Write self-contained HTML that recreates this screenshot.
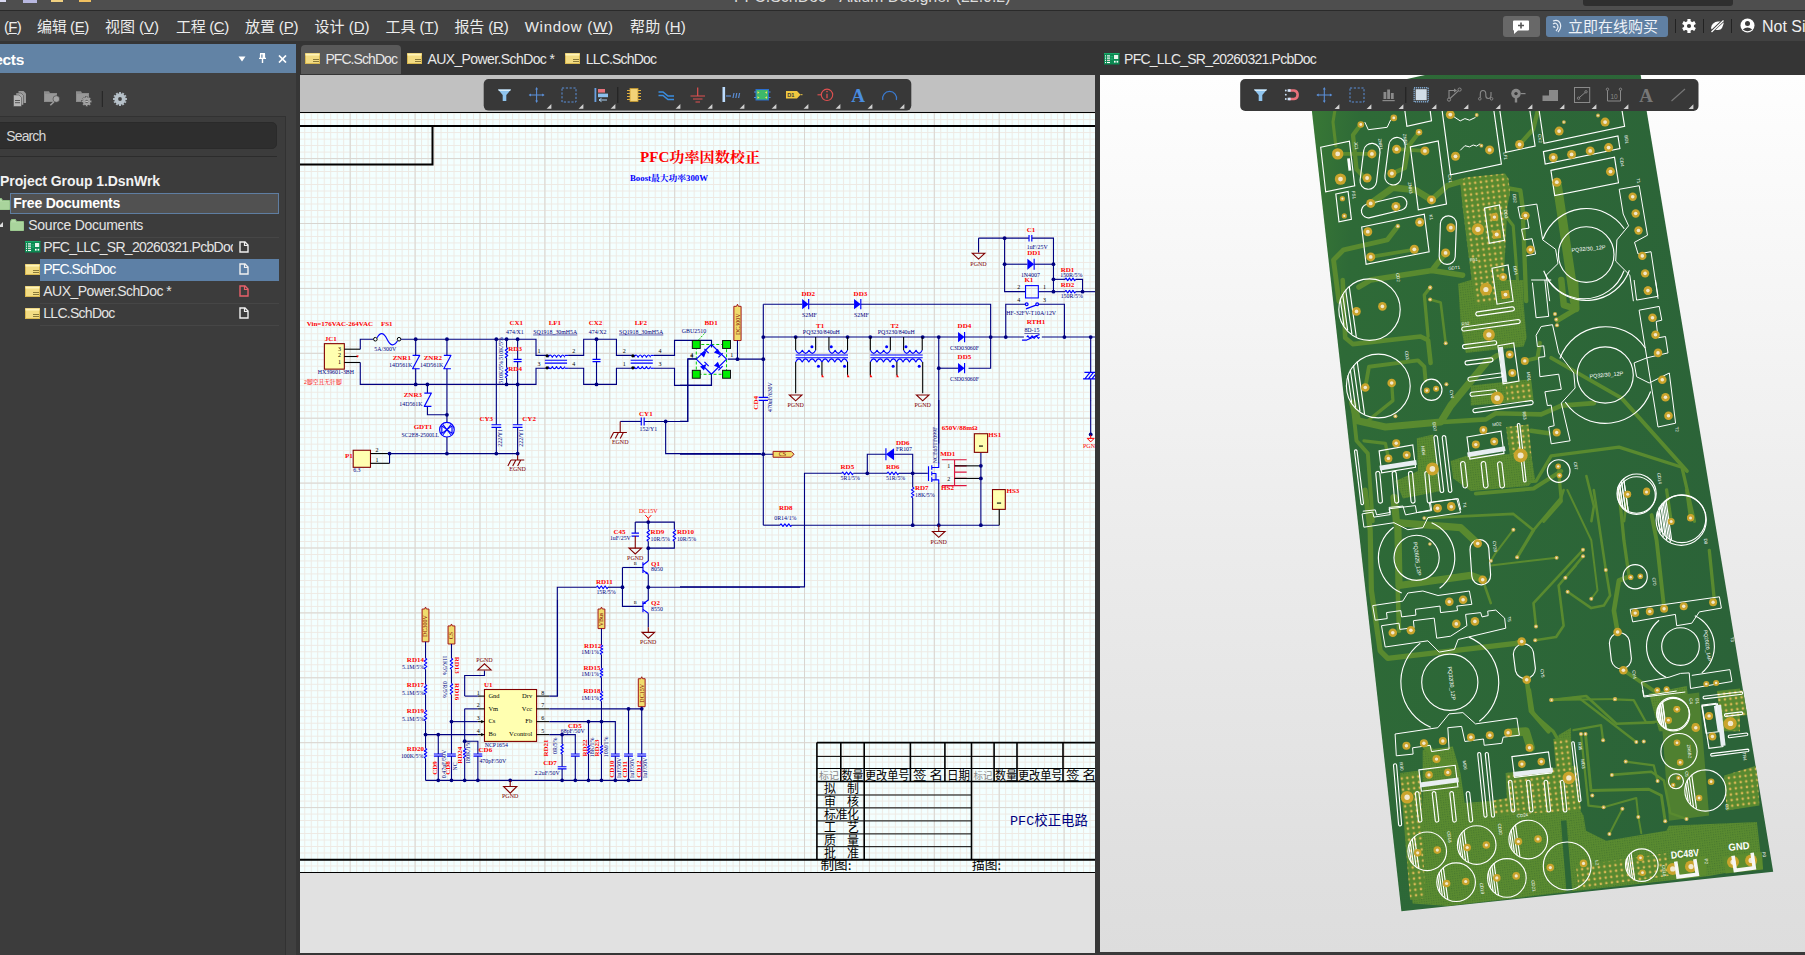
<!DOCTYPE html>
<html lang="zh"><head><meta charset="utf-8"><title>Altium Designer</title>
<style>
*{box-sizing:border-box;margin:0;padding:0}
html,body{width:1805px;height:955px;overflow:hidden;background:#3c3c3c;font-family:"Liberation Sans","Noto Sans CJK SC",sans-serif;color:#e6e6e6}
.a{position:absolute}
.t{position:absolute;white-space:nowrap;line-height:1}
#title{left:0;top:0;width:1805px;height:10px;background:#4e4e4e}
#menubar{left:0;top:10px;width:1805px;height:31px;background:#424242;border-top:1px solid #2a2a2a}
#tabbar{left:0;top:41px;width:1805px;height:34px;background:#353535}
.m{position:absolute;top:18px;font-size:15px;line-height:17px;white-space:nowrap;color:#ececec}
.m u{text-decoration-thickness:1px;text-underline-offset:2px}
#lp{left:0;top:44px;width:296px;height:911px;background:#404040}
#lph{left:0;top:44px;width:296px;height:29px;background:#6283a5}
#lpin{left:0;top:116px;width:286px;height:839px;background:#3c3c3c;border-top:1px solid #323232;border-right:1px solid #323232}
#gap{left:296px;top:44px;width:4px;height:911px;background:#363636}
#search{left:-6px;top:122px;width:283px;height:27px;background:#2e2e2e;border-radius:5px;border:1px solid #2a2a2a}
.tr{position:absolute;font-size:14px;line-height:16px;white-space:nowrap;color:#e4e4e4}
.tab{position:absolute;font-size:14px;line-height:16px;white-space:nowrap;color:#e8e8e8;top:51px}

#schwin{left:300px;top:75px;width:796px;height:880px;background:#c1c1c1;overflow:hidden}
#split{left:1095px;top:75px;width:5px;height:880px;background:#363636}
#schsvg{left:300px;top:75px}
#schsvg text{font-family:"Liberation Serif","Noto Serif CJK SC",serif}
.d{fill:#f00;font-weight:bold;font-size:7px}
.v{fill:#000080;font-size:5.9px}
.pn{fill:#000;font-size:6px}
.g{fill:#800000;font-size:6px}
.w{stroke:#000080;stroke-width:1.12;fill:none}
.s{stroke:#00f;stroke-width:1.15;fill:none;stroke-linejoin:round}
.k{stroke:#000;stroke-width:1.1;fill:none}
.gr{stroke:#800000;stroke-width:1.1;fill:none}
.j{fill:#000080}

#pcbwin{left:1100px;top:75px;width:705px;height:880px;background:linear-gradient(#fefefe 0%,#f9f9f9 15%,#ececec 52%,#e0e0e0 88%,#dddddd 100%);overflow:hidden}
#pcbsvg{left:1100px;top:75px}
#pcbsvg text{font-family:"Liberation Sans",sans-serif}
.sk{stroke:#fff;stroke-width:1.15;fill:none}
.cu{stroke:#598a2f;fill:none;stroke-linecap:round;stroke-linejoin:round}
</style></head>
<body>
<div id="schwin" class="a"></div><svg id="schsvg" class="a" width="796" height="880" viewBox="300 75 796 880"><defs><pattern id="gm" x="349.7" y="223" width="6.49" height="6.49" patternUnits="userSpaceOnUse"><path d="M0.5 0V6.49M0 0.5H6.49" stroke="#eee9e3" stroke-width="1" fill="none"/></pattern><pattern id="gM" x="349.7" y="223" width="64.9" height="64.9" patternUnits="userSpaceOnUse"><path d="M0.5 0V64.9M0 0.5H64.9" stroke="#d8d5d0" stroke-width="1" fill="none"/></pattern></defs>
<rect x="300" y="75" width="796" height="38" fill="#c1c1c1"/>
<rect x="300" y="873" width="796" height="82" fill="#e1e1e1"/>
<rect x="300" y="113" width="796" height="760" fill="#f3ffff"/>
<rect x="300" y="113" width="796" height="760" fill="url(#gm)"/>
<rect x="300" y="113" width="796" height="760" fill="url(#gM)"/>
<path d="M300 112.5H1096M300 872.5H1096" stroke="#000" stroke-width="1"/>
<path d="M300 126H1096M300 164.5H432.5V126M300 859.7H1096" stroke="#000" stroke-width="2" fill="none"/>
<rect x="300" y="953" width="796" height="2" fill="#363636"/>
<rect x="324.38" y="343.66" width="19.94" height="25.48" fill="#ffffb0" stroke="#800000" stroke-width="1.1"/>
<path class="k" d="M344.32 349.2 L360.28 349.2"/>
<path class="k" d="M344.32 356.51 L357.17 356.51"/>
<path class="k" d="M344.32 362.49 L360.28 362.49"/>
<path d="M356.51 355.18L358.95 355.84L357.17 357.84Z" fill="#f00"/>
<text class="pn" x="339.45" y="350.97" text-anchor="middle">3</text>
<text class="pn" x="339.45" y="357.4" text-anchor="middle">2</text>
<text class="pn" x="339.45" y="364.27" text-anchor="middle">1</text>
<text class="d" x="324.82" y="341.44" text-anchor="start">JC1</text>
<text class="v" x="317.73" y="374.02" text-anchor="start">HX39601-3BH</text>
<text class="d" x="303.99" y="383.77" text-anchor="start" textLength="37.7" lengthAdjust="spacingAndGlyphs" style="font-size:6.2px;font-weight:normal">2脚空且无针脚</text>
<text class="d" x="306.65" y="326.15" text-anchor="start">Vin=176VAC-264VAC</text>
<text class="d" x="380.89" y="326.15" text-anchor="start">FS1</text>
<path class="w" d="M360.28 349.2 L360.28 339.22 L373.57 339.22"/>
<circle cx="375.35" cy="339.22" r="1.8" fill="#f3ffff" stroke="#000" stroke-width="1"/><circle cx="399.06" cy="339.22" r="1.8" fill="#f3ffff" stroke="#000" stroke-width="1"/>
<path class="s" d="M377.12 337.67 Q381.99 328.81 387.09 339.22 T397.51 340.78"/>
<text class="v" x="374.24" y="350.53" text-anchor="start">5A/300V</text>
<path class="w" d="M400.83 339.22 L536.01 339.22 L536.01 355.4 L545.98 355.4"/>
<path class="w" d="M360.28 362.49 L360.28 384.43 L536.01 384.43 L536.01 368.25 L545.98 368.25"/>
<path class="w" d="M415.68 339.22 L415.68 355.4"/>
<path class="w" d="M415.68 368.7 L415.68 384.43"/>
<path class="s" d="M412.58 355.4H419.67L412.58 368.7H419.67"/>
<path class="w" d="M446.93 339.22 L446.93 355.4"/>
<path class="w" d="M446.93 368.7 L446.93 422.33"/>
<path class="w" d="M446.93 436.95 L446.93 453.57"/>
<path class="s" d="M443.82 355.4H450.91L443.82 368.7H450.91"/>
<path class="w" d="M427.42 384.43 L427.42 393.07"/>
<path class="w" d="M427.42 406.37 L427.42 414.79 L446.93 414.79"/>
<path class="s" d="M424.32 393.07H431.41L424.32 406.37H431.41"/>
<text class="d" x="392.63" y="359.83" text-anchor="start">ZNR1</text>
<text class="v" x="389.09" y="366.93" text-anchor="start">14D561K</text>
<text class="d" x="423.66" y="359.83" text-anchor="start">ZNR2</text>
<text class="v" x="420.11" y="366.93" text-anchor="start">14D561K</text>
<text class="d" x="403.71" y="396.62" text-anchor="start">ZNR3</text>
<text class="v" x="399.28" y="405.71" text-anchor="start">14D561K</text>
<circle cx="446.93" cy="429.64" r="7.31" class="s" stroke-width="1.3"/>
<path d="M441.83 425.87L446.93 429.64L441.83 433.41ZM452.02 425.87L446.93 429.64L452.02 433.41Z" fill="none" class="s"/><path class="s" d="M442.94 424.54L450.91 434.74M450.91 424.54L442.94 434.74"/>
<text class="d" x="413.68" y="428.53" text-anchor="start">GDT1</text>
<text class="v" x="401.5" y="436.51" text-anchor="start">SC2E8-2500LL</text>
<path class="w" d="M389.53 453.57 L517.62 453.57"/>
<path class="w" d="M389.53 453.57 L389.53 463.32"/>
<rect x="353.19" y="450.25" width="17.29" height="17.06" fill="#ffffb0" stroke="#800000" stroke-width="1.1"/>
<path class="k" d="M370.47 453.57 L389.53 453.57"/>
<path class="k" d="M370.47 463.32 L389.53 463.32"/>
<text class="pn" x="377.12" y="452.47" text-anchor="middle">2</text>
<text class="pn" x="377.12" y="462.22" text-anchor="middle">1</text>
<text class="d" x="344.99" y="458.23" text-anchor="start">P1</text>
<text class="v" x="353.19" y="471.75" text-anchor="start">6.3</text>
<path class="w" d="M496.34 339.22 L496.34 424.76"/>
<path class="w" d="M496.34 427.42 L496.34 453.57"/>
<path class="s" stroke-width="1.4" d="M491.47 424.76H501.22M491.47 427.42H501.22"/>
<text class="d" x="479.5" y="421.44" text-anchor="start">CY3</text>
<text class="v" x="501.66" y="446.7" text-anchor="start" transform="rotate(-90 501.66 446.7)">222/Y1</text>
<path class="w" d="M517.62 339.22 L517.62 359.39"/>
<path class="w" d="M517.62 361.61 L517.62 424.76"/>
<path class="w" d="M517.62 427.42 L517.62 453.57"/>
<path class="s" stroke-width="1.4" d="M513.63 359.39H521.61M513.63 361.61H521.61"/>
<path class="s" stroke-width="1.4" d="M512.74 424.76H522.49M512.74 427.42H522.49"/>
<text class="d" x="522.27" y="421.44" text-anchor="start">CY2</text>
<text class="v" x="522.71" y="446.7" text-anchor="start" transform="rotate(-90 522.71 446.7)">222/Y1</text>
<path class="gr" d="M517.62 453.57 L517.62 460.0"/>
<path class="gr" d="M510.97 460.0H524.27M510.97 460.0L507.87 465.98M515.84 460.0L512.74 465.98M520.72 460.0L517.62 465.98"/>
<text class="g" x="517.62" y="471.08" text-anchor="middle">EGND</text>
<path class="w" d="M506.54 339.22 L506.54 347.65"/>
<path class="s" d="M506.54 347.65 L507.76 348.51 L505.32 350.25 L506.54 351.12 L507.76 351.99 L505.32 353.72 L506.54 354.59 L507.76 355.46 L505.32 357.19 L506.54 358.06"/>
<path class="w" d="M506.54 358.06 L506.54 367.59"/>
<path class="s" d="M506.54 367.59 L507.76 368.46 L505.32 370.19 L506.54 371.06 L507.76 371.93 L505.32 373.67 L506.54 374.53 L507.76 375.4 L505.32 377.14 L506.54 378.01"/>
<path class="w" d="M506.54 378.01 L506.54 384.43"/>
<text class="d" x="508.31" y="351.41" text-anchor="start">RD3</text>
<text class="d" x="508.31" y="371.36" text-anchor="start">RD4</text>
<text class="v" x="502.55" y="383.77" text-anchor="start" transform="rotate(-90 502.55 383.77)">510K/5%  510K/5%</text>
<text class="d" x="509.42" y="325.48" text-anchor="start">CX1</text>
<text class="v" x="506.09" y="333.68" text-anchor="start">474/X1</text>
<circle class="j" cx="415.68" cy="339.22" r="1.9"/>
<circle class="j" cx="446.93" cy="339.22" r="1.9"/>
<circle class="j" cx="496.34" cy="339.22" r="1.9"/>
<circle class="j" cx="506.54" cy="339.22" r="1.9"/>
<circle class="j" cx="517.62" cy="339.22" r="1.9"/>
<circle class="j" cx="415.68" cy="384.43" r="1.9"/>
<circle class="j" cx="427.42" cy="384.43" r="1.9"/>
<circle class="j" cx="506.54" cy="384.43" r="1.9"/>
<circle class="j" cx="517.62" cy="384.43" r="1.9"/>
<circle class="j" cx="446.93" cy="414.79" r="1.9"/>
<circle class="j" cx="389.53" cy="453.57" r="1.9"/>
<circle class="j" cx="446.93" cy="453.57" r="1.9"/>
<circle class="j" cx="496.34" cy="453.57" r="1.9"/>
<circle class="j" cx="517.62" cy="453.57" r="1.9"/>
<path class="s" d="M545.98 355.4 L550.42 355.4"/>
<path class="s" d="M564.82 355.4 L568.14 355.4"/>
<path class="s" d="M545.98 368.25 L550.42 368.25"/>
<path class="s" d="M564.82 368.25 L568.14 368.25"/>
<path class="s" d="M548.2 357.17 Q550.28 352.74 552.35 357.17 Q554.43 352.74 556.51 357.17 Q558.59 352.74 560.66 357.17 Q562.74 352.74 564.82 357.17 M548.2 366.48 Q550.28 370.91 552.35 366.48 Q554.43 370.91 556.51 366.48 Q558.59 370.91 560.66 366.48 Q562.74 370.91 564.82 366.48"/>
<path class="s" stroke-width="1.6" d="M544.88 360.28H567.04M544.88 363.16H567.04"/>
<circle cx="547.09" cy="355.84" r="1.6" fill="#000"/><circle cx="547.09" cy="367.81" r="1.6" fill="#000"/>
<text class="d" x="548.64" y="325.48" text-anchor="start">LF1</text>
<text class="v" x="533.13" y="333.68" text-anchor="start" text-decoration="underline">SQ1918_30mH5A</text>
<text class="pn" x="538.89" y="353.19" text-anchor="middle">1</text>
<text class="pn" x="573.68" y="353.19" text-anchor="middle">2</text>
<text class="pn" x="538.89" y="366.48" text-anchor="middle">3</text>
<text class="pn" x="573.68" y="366.04" text-anchor="middle">4</text>
<path class="w" d="M568.14 355.4 L583.66 355.4 L583.66 339.22 L616.45 339.22 L616.45 355.4 L631.75 355.4"/>
<path class="w" d="M568.14 368.25 L583.66 368.25 L583.66 384.43 L616.45 384.43 L616.45 368.25 L631.75 368.25"/>
<path class="w" d="M596.51 339.22 L596.51 359.39"/>
<path class="w" d="M596.51 361.61 L596.51 384.43"/>
<path class="s" stroke-width="1.4" d="M592.52 359.39H600.5M592.52 361.61H600.5"/>
<circle class="j" cx="596.51" cy="339.22" r="1.9"/>
<circle class="j" cx="596.51" cy="384.43" r="1.9"/>
<text class="d" x="588.75" y="325.48" text-anchor="start">CX2</text>
<text class="v" x="588.75" y="333.68" text-anchor="start">474/X2</text>
<path class="s" d="M631.75 355.4 L636.18 355.4"/>
<path class="s" d="M650.58 355.4 L653.91 355.4"/>
<path class="s" d="M631.75 368.25 L636.18 368.25"/>
<path class="s" d="M650.58 368.25 L653.91 368.25"/>
<path class="s" d="M633.96 357.17 Q636.04 352.74 638.12 357.17 Q640.19 352.74 642.27 357.17 Q644.35 352.74 646.43 357.17 Q648.5 352.74 650.58 357.17 M633.96 366.48 Q636.04 370.91 638.12 366.48 Q640.19 370.91 642.27 366.48 Q644.35 370.91 646.43 366.48 Q648.5 370.91 650.58 366.48"/>
<path class="s" stroke-width="1.6" d="M630.64 360.28H652.8M630.64 363.16H652.8"/>
<circle cx="632.85" cy="355.84" r="1.6" fill="#000"/><circle cx="632.85" cy="367.81" r="1.6" fill="#000"/>
<text class="d" x="634.63" y="325.48" text-anchor="start">LF2</text>
<text class="v" x="619.11" y="333.68" text-anchor="start" text-decoration="underline">SQ1918_30mH5A</text>
<text class="pn" x="624.21" y="353.19" text-anchor="middle">2</text>
<text class="pn" x="660.11" y="353.19" text-anchor="middle">4</text>
<text class="pn" x="624.21" y="366.04" text-anchor="middle">1</text>
<text class="pn" x="660.11" y="366.04" text-anchor="middle">3</text>
<path class="w" d="M653.91 355.4 L674.52 355.4 L674.52 340.33 L711.52 340.33 L711.52 347.42"/>
<path class="w" d="M653.91 368.25 L674.52 368.25 L674.52 385.32 L711.52 385.32 L711.52 377.56"/>
<path class="w" d="M620.22 421.44 L641.27 421.44"/>
<path class="w" d="M644.16 421.44 L687.81 421.44 L687.81 358.73 L696.68 358.73"/>
<path class="s" stroke-width="1.4" d="M641.27 417.45V425.43M644.16 417.45V425.43"/>
<path class="w" d="M665.65 421.44 L665.65 453.57 L760.94 453.57"/>
<circle class="j" cx="665.65" cy="421.44" r="1.9"/>
<text class="d" x="639.06" y="415.68" text-anchor="start">CY1</text>
<text class="v" x="639.5" y="431.19" text-anchor="start">152/Y1</text>
<path class="gr" d="M620.22 421.44 L620.22 432.52"/>
<path class="gr" d="M613.57 432.52H626.87M613.57 432.52L610.47 438.5M618.45 432.52L615.35 438.5M623.32 432.52L620.22 438.5"/>
<text class="g" x="620.22" y="443.6" text-anchor="middle">EGND</text>
<text class="pn" x="691.8" y="358.06" text-anchor="middle">4</text>
<rect x="696.29" y="344.49" width="30.25" height="29.78" fill="none" stroke="#0c0" stroke-width="1" stroke-dasharray="3 2"/>
<path class="s" stroke-width=".8" d="M711.41 344.49L726.54 359.15L711.41 374.27L696.29 359.15Z"/>
<g transform="translate(704.43 353.1) rotate(-45)"><path d="M-3.5 -2.8L3 0L-3.5 2.8Z" fill="#00f"/><path d="M3 -3V3" stroke="#00f" stroke-width="1.2"/></g>
<g transform="translate(718.39 353.1) rotate(45)"><path d="M-3.5 -2.8L3 0L-3.5 2.8Z" fill="#00f"/><path d="M3 -3V3" stroke="#00f" stroke-width="1.2"/></g>
<g transform="translate(704.43 366.13) rotate(-45)"><path d="M-3.5 -2.8L3 0L-3.5 2.8Z" fill="#00f"/><path d="M3 -3V3" stroke="#00f" stroke-width="1.2"/></g>
<g transform="translate(718.39 366.13) rotate(45)"><path d="M-3.5 -2.8L3 0L-3.5 2.8Z" fill="#00f"/><path d="M3 -3V3" stroke="#00f" stroke-width="1.2"/></g>
<rect x="692.33" y="340.53" width="7.91" height="7.91" fill="#0e0" stroke="#111" stroke-width="1"/>
<rect x="722.58" y="340.53" width="7.91" height="7.91" fill="#0e0" stroke="#111" stroke-width="1"/>
<rect x="692.33" y="370.32" width="7.91" height="7.91" fill="#0e0" stroke="#111" stroke-width="1"/>
<rect x="722.58" y="370.32" width="7.91" height="7.91" fill="#0e0" stroke="#111" stroke-width="1"/>
<path d="M698.62 339.83L704.43 333.55" stroke="#0c0" stroke-width="1" stroke-dasharray="2 1.5"/>
<text class="d" x="704.43" y="325.17" text-anchor="start">BD1</text>
<text class="v" x="681.86" y="332.62" text-anchor="start">GBU2510</text>
<text class="pn" x="691.63" y="357.29" text-anchor="middle">4</text>
<text class="pn" x="731.66" y="357.29" text-anchor="middle">1</text>
<path class="w" d="M687.68 359.15 L696.75 359.15"/>
<path class="w" d="M687.68 359.15 L687.68 421.28 L680.0 421.28"/>
<path class="w" d="M711.41 374.27 L711.41 385.21 L680.0 385.21"/>
<path class="w" d="M727.7 359.15 L763.3 359.15"/>
<circle class="j" cx="737.47" cy="359.15" r="1.9"/>
<circle class="j" cx="763.3" cy="359.15" r="1.9"/>
<path d="M733.87 306.33L736.54 306.33L737.47 304.23L738.4 306.33L741.08 306.33V340.53H733.87Z" fill="#f0dc6c" stroke="#a01818" stroke-width="1"/>
<text class="g" x="739.57" y="324.13" text-anchor="middle" transform="rotate(-90 739.57 324.13)" style="font-size:6px">DC300V</text>
<path class="w" d="M737.47 340.53 L737.47 359.15"/>
<path class="w" d="M763.3 304.23 L763.3 397.31"/>
<path class="w" d="M763.3 400.33 L763.3 525.29"/>
<path class="s" stroke-width="1.4" d="M758.65 397.31H767.96M758.65 400.33H767.96"/>
<text class="d" x="757.95" y="409.64" text-anchor="start" transform="rotate(-90 757.95 409.64)">CD4</text>
<text class="v" x="771.91" y="411.97" text-anchor="start" transform="rotate(-90 771.91 411.97)">470uF/630V</text>
<path class="w" d="M763.3 304.23 L802.16 304.23"/>
<path class="w" d="M808.68 304.23 L854.05 304.23"/>
<path class="w" d="M860.8 304.23 L990.64 304.23 L990.64 368.22 L968.53 368.22"/>
<path d="M802.16 299.11L808.68 304.23L802.16 309.35Z" fill="#00f"/><path class="s" stroke-width="1.5" d="M808.68 299.11V309.35"/>
<path d="M854.05 299.11L860.8 304.23L854.05 309.35Z" fill="#00f"/><path class="s" stroke-width="1.5" d="M860.8 299.11V309.35"/>
<text class="d" x="801.46" y="295.62" text-anchor="start">DD2</text>
<text class="v" x="801.93" y="316.57" text-anchor="start">S2MF</text>
<text class="d" x="853.59" y="295.62" text-anchor="start">DD3</text>
<text class="v" x="854.05" y="316.57" text-anchor="start">S2MF</text>
<path class="w" d="M763.3 337.04 L958.06 337.04"/>
<path class="w" d="M964.58 337.04 L1023.91 337.04"/>
<path class="w" d="M1041.83 337.04 L1096.51 337.04"/>
<circle class="j" cx="763.3" cy="337.04" r="1.9"/>
<circle class="j" cx="795.65" cy="337.04" r="1.9"/>
<circle class="j" cx="847.54" cy="337.04" r="1.9"/>
<circle class="j" cx="870.34" cy="337.04" r="1.9"/>
<circle class="j" cx="922.69" cy="337.04" r="1.9"/>
<circle class="j" cx="938.75" cy="337.04" r="1.9"/>
<circle class="j" cx="990.64" cy="337.04" r="1.9"/>
<circle class="j" cx="1005.76" cy="337.04" r="1.9"/>
<circle class="j" cx="1064.4" cy="337.04" r="1.9"/>
<circle class="j" cx="1090.69" cy="337.04" r="1.9"/>
<path class="k" d="M795.65 337.04 L795.65 350.31"/>
<path class="k" d="M815.66 337.04 L815.66 350.31"/>
<path class="k" d="M828.92 337.04 L828.92 350.31"/>
<path class="k" d="M847.54 337.04 L847.54 350.31"/>
<path class="s" d="M795.65 350.31 Q798.98 356.36 802.32 350.31 Q805.65 356.36 808.99 350.31 Q812.32 356.36 815.66 350.31"/>
<path class="s" d="M828.92 350.31 Q832.02 356.36 835.13 350.31 Q838.23 356.36 841.33 350.31 Q844.43 356.36 847.54 350.31"/>
<path class="s" stroke-width="1.5" d="M795.65 354.96H848.0M795.65 357.75H848.0"/>
<path class="s" d="M795.65 361.94 Q798.93 355.89 802.22 361.94 Q805.51 355.89 808.79 361.94 Q812.08 355.89 815.37 361.94 Q818.65 355.89 821.94 361.94"/>
<path class="s" d="M821.94 361.94 Q825.14 355.89 828.34 361.94 Q831.54 355.89 834.74 361.94 Q837.94 355.89 841.14 361.94 Q844.34 355.89 847.54 361.94"/>
<circle cx="811.93" cy="346.81" r="1.5" fill="#00f"/>
<circle cx="831.25" cy="346.81" r="1.5" fill="#00f"/>
<circle cx="818.45" cy="366.13" r="1.5" fill="#00f"/>
<circle cx="844.51" cy="366.13" r="1.5" fill="#00f"/>
<path class="k" d="M795.65 361.94 L795.65 393.35"/>
<path class="k" d="M821.94 361.94 L821.94 375.44"/>
<path class="k" d="M847.54 361.94 L847.54 375.44"/>
<path d="M821.94 374.04L824.03 377.3L821.47 377.3Z" fill="#f00"/>
<path d="M847.54 374.04L849.63 377.3L847.07 377.3Z" fill="#f00"/>
<path class="gr" d="M789.36 394.98H801.93L795.65 400.8Z"/>
<text class="g" x="795.65" y="407.31" text-anchor="middle">PGND</text>
<text class="d" x="816.12" y="327.5" text-anchor="start">T1</text>
<text class="v" x="802.86" y="334.48" text-anchor="start">PQ3230/840uH</text>
<path class="k" d="M870.34 337.04 L870.34 350.31"/>
<path class="k" d="M890.35 337.04 L890.35 350.31"/>
<path class="k" d="M903.61 337.04 L903.61 350.31"/>
<path class="k" d="M922.23 337.04 L922.23 350.31"/>
<path class="s" d="M870.34 350.31 Q873.67 356.36 877.01 350.31 Q880.34 356.36 883.68 350.31 Q887.01 356.36 890.35 350.31"/>
<path class="s" d="M903.61 350.31 Q906.72 356.36 909.82 350.31 Q912.92 356.36 916.02 350.31 Q919.13 356.36 922.23 350.31"/>
<path class="s" stroke-width="1.5" d="M870.34 354.96H922.69M870.34 357.75H922.69"/>
<path class="s" d="M870.34 361.94 Q873.63 355.89 876.91 361.94 Q880.2 355.89 883.49 361.94 Q886.77 355.89 890.06 361.94 Q893.35 355.89 896.63 361.94"/>
<path class="s" d="M896.63 361.94 Q899.83 355.89 903.03 361.94 Q906.23 355.89 909.43 361.94 Q912.63 355.89 915.83 361.94 Q919.03 355.89 922.23 361.94"/>
<circle cx="886.63" cy="346.81" r="1.5" fill="#00f"/>
<circle cx="905.94" cy="346.81" r="1.5" fill="#00f"/>
<circle cx="893.14" cy="366.13" r="1.5" fill="#00f"/>
<circle cx="919.2" cy="366.13" r="1.5" fill="#00f"/>
<path class="k" d="M870.34 361.94 L870.34 375.44"/>
<path class="k" d="M896.87 361.94 L896.87 375.44"/>
<path class="k" d="M922.69 361.94 L922.69 393.35"/>
<path d="M870.34 374.04L872.43 377.3L869.87 377.3Z" fill="#f00"/>
<path d="M896.87 374.04L898.96 377.3L896.4 377.3Z" fill="#f00"/>
<path class="gr" d="M916.41 394.98H928.98L922.69 400.8Z"/>
<text class="g" x="922.69" y="407.31" text-anchor="middle">PGND</text>
<text class="d" x="890.58" y="327.5" text-anchor="start">T2</text>
<text class="v" x="877.78" y="334.48" text-anchor="start">PQ3230/840uH</text>
<path class="w" d="M938.75 337.04 L938.75 443.38"/>
<circle class="j" cx="938.75" cy="368.22" r="1.9"/>
<path class="w" d="M938.75 368.22 L958.06 368.22"/>
<path d="M958.06 331.92L964.58 337.04L958.06 342.16Z" fill="#00f"/><path class="s" stroke-width="1.5" d="M964.58 331.92V342.16"/>
<path d="M958.06 363.1L964.58 368.22L958.06 373.34Z" fill="#00f"/><path class="s" stroke-width="1.5" d="M964.58 363.1V373.34"/>
<text class="d" x="957.6" y="327.5" text-anchor="start">DD4</text>
<text class="v" x="949.92" y="350.31" text-anchor="start">C3D03060F</text>
<text class="d" x="957.6" y="359.15" text-anchor="start">DD5</text>
<text class="v" x="949.92" y="381.49" text-anchor="start">C3D03060F</text>
<path class="w" d="M978.54 238.15 L1029.03 238.15"/>
<path class="w" d="M1031.82 238.15 L1053.46 238.15 L1053.46 291.67"/>
<path class="s" stroke-width="1.4" d="M1029.03 234.89V241.41M1031.82 234.89V241.41"/>
<path class="w" d="M978.54 238.15 L978.54 252.58"/>
<path class="gr" d="M972.26 253.27H984.82L978.54 259.09Z"/>
<text class="g" x="978.54" y="265.61" text-anchor="middle">PGND</text>
<path class="w" d="M1004.6 238.15 L1004.6 291.67 L1025.54 291.67"/>
<path class="w" d="M1038.34 291.67 L1065.1 291.67"/>
<path class="w" d="M1075.57 291.67 L1095.35 291.67"/>
<path class="s" d="M1065.1 291.67 L1065.97 290.39 L1067.72 292.95 L1068.59 291.67 L1069.46 290.39 L1071.21 292.95 L1072.08 291.67 L1072.95 290.39 L1074.7 292.95 L1075.57 291.67"/>
<path class="w" d="M1053.46 279.34 L1065.1 279.34"/>
<path class="s" d="M1065.1 279.34 L1065.97 278.06 L1067.72 280.62 L1068.59 279.34 L1069.46 278.06 L1071.21 280.62 L1072.08 279.34 L1072.95 278.06 L1074.7 280.62 L1075.57 279.34"/>
<path class="w" d="M1075.57 279.34 L1082.55 279.34 L1082.55 291.67"/>
<path class="w" d="M1004.6 264.21 L1027.4 264.21"/>
<path class="w" d="M1034.15 264.21 L1053.46 264.21"/>
<path d="M1027.4 258.63L1034.15 264.21L1027.4 269.8Z" fill="#00f"/><path class="s" stroke-width="1.5" d="M1034.15 258.63V269.8"/>
<circle class="j" cx="1004.6" cy="238.15" r="1.9"/>
<circle class="j" cx="1004.6" cy="264.21" r="1.9"/>
<circle class="j" cx="1053.46" cy="264.21" r="1.9"/>
<circle class="j" cx="1053.46" cy="279.34" r="1.9"/>
<circle class="j" cx="1053.46" cy="291.67" r="1.9"/>
<circle class="j" cx="1082.55" cy="291.67" r="1.9"/>
<rect x="1025.54" y="285.62" width="12.8" height="12.33" fill="none" stroke="#00f" stroke-width="1.1"/>
<text class="d" x="1026.71" y="232.1" text-anchor="start">C1</text>
<text class="v" x="1026.71" y="248.62" text-anchor="start">1uF/25V</text>
<text class="d" x="1027.17" y="255.37" text-anchor="start">DD1</text>
<text class="v" x="1020.89" y="276.54" text-anchor="start">1N4007</text>
<text class="d" x="1024.38" y="282.36" text-anchor="start">K1</text>
<text class="d" x="1060.68" y="271.89" text-anchor="start">RD1</text>
<text class="v" x="1060.21" y="277.24" text-anchor="start">150R/5%</text>
<text class="d" x="1060.68" y="287.48" text-anchor="start">RD2</text>
<text class="v" x="1060.68" y="298.18" text-anchor="start">150R/5%</text>
<text class="pn" x="1018.79" y="289.34" text-anchor="middle">2</text>
<text class="pn" x="1044.62" y="289.34" text-anchor="middle">1</text>
<text class="pn" x="1018.79" y="302.14" text-anchor="middle">4</text>
<text class="pn" x="1044.62" y="302.14" text-anchor="middle">3</text>
<path class="w" d="M1005.76 337.04 L1005.76 304.23 L1026.01 304.23"/>
<path class="w" d="M1037.87 304.23 L1064.4 304.23 L1064.4 337.04"/>
<circle cx="1026.71" cy="304.23" r="1.4" class="s"/><circle cx="1037.18" cy="304.23" r="1.4" class="s"/><path class="s" d="M1026.01 308.89L1036.01 305.16"/>
<text class="v" x="1006.23" y="315.4" text-anchor="start">HF-32FV-T10A/12V</text>
<text class="d" x="1026.71" y="324.24" text-anchor="start">RTH1</text>
<text class="v" x="1024.38" y="332.39" text-anchor="start" text-decoration="underline">8D-15</text>
<path class="s" d="M1026.71 337.04 L1027.77 335.76 L1029.9 338.32 L1030.97 337.04 L1032.04 335.76 L1034.17 338.32 L1035.24 337.04 L1036.3 335.76 L1038.44 338.32 L1039.5 337.04"/>
<path class="s" d="M1022.05 340.07H1026.71L1039.5 334.48"/>
<path class="w" d="M1090.69 337.04 L1090.69 372.41"/>
<path class="w" d="M1090.69 378.93 L1090.69 400.33"/>
<path class="s" stroke-width="1.4" d="M1084.41 372.41H1096.51M1083.02 378.93H1096.51M1084.88 378.93L1090.0 372.41M1088.37 378.93L1093.49 372.41M1091.86 378.93L1096.51 373.11"/>
<path class="w" d="M763.3 525.19 L780.06 525.19"/>
<path class="s" d="M780.06 525.19 L781.03 523.91 L782.96 526.47 L783.93 525.19 L784.9 523.91 L786.84 526.47 L787.81 525.19 L788.78 523.91 L790.72 526.47 L791.69 525.19"/>
<path class="w" d="M791.69 525.19 L999.25 525.19"/>
<path class="w" d="M680.0 454.22 L773.08 454.22"/>
<circle class="j" cx="763.3" cy="454.22" r="1.9"/>
<circle class="j" cx="912.69" cy="525.19" r="1.9"/>
<circle class="j" cx="938.75" cy="525.19" r="1.9"/>
<circle class="j" cx="980.87" cy="525.19" r="1.9"/>
<path d="M773.08 451.42H791.22L794.02 454.22L791.22 457.24H773.08Z" fill="#f0dc6c" stroke="#a01818" stroke-width="1"/>
<text class="g" x="782.38" y="456.31" text-anchor="middle">CS</text>
<text class="d" x="778.89" y="510.29" text-anchor="start">RD8</text>
<text class="v" x="774.24" y="519.6" text-anchor="start">0R14/1%</text>
<path class="w" d="M680.0 586.85 L804.49 586.85 L804.49 473.3 L841.72 473.3"/>
<path class="s" d="M841.72 473.3 L842.69 472.02 L844.63 474.58 L845.6 473.3 L846.57 472.02 L848.5 474.58 L849.47 473.3 L850.44 472.02 L852.38 474.58 L853.35 473.3"/>
<path class="w" d="M853.35 473.3 L887.09 473.3"/>
<path class="s" d="M887.09 473.3 L888.06 472.02 L890.0 474.58 L890.97 473.3 L891.94 472.02 L893.88 474.58 L894.85 473.3 L895.82 472.02 L897.76 474.58 L898.73 473.3"/>
<path class="w" d="M898.73 473.3 L927.81 473.3"/>
<path class="w" d="M867.31 473.3 L867.31 454.22 L885.93 454.22"/>
<path class="w" d="M894.07 454.22 L912.69 454.22 L912.69 487.26"/>
<path class="s" d="M912.69 487.26 L913.97 488.13 L911.41 489.88 L912.69 490.75 L913.97 491.62 L911.41 493.37 L912.69 494.24 L913.97 495.11 L911.41 496.86 L912.69 497.73"/>
<path class="w" d="M912.69 497.73 L912.69 525.19"/>
<path d="M894.07 448.17L885.93 454.22L894.07 460.27Z" fill="#00f"/><path class="s" stroke-width="1.5" d="M885.93 448.17V460.27"/>
<circle class="j" cx="867.31" cy="473.3" r="1.9"/>
<circle class="j" cx="912.69" cy="473.3" r="1.9"/>
<text class="d" x="840.55" y="469.11" text-anchor="start">RD5</text>
<text class="v" x="840.55" y="480.28" text-anchor="start">5R1/5%</text>
<text class="d" x="885.93" y="469.11" text-anchor="start">RD6</text>
<text class="v" x="885.93" y="480.28" text-anchor="start">51R/5%</text>
<text class="d" x="895.93" y="445.14" text-anchor="start">DD6</text>
<text class="v" x="895.93" y="451.19" text-anchor="start">FR107</text>
<text class="d" x="915.01" y="490.28" text-anchor="start">RD7</text>
<text class="v" x="915.01" y="497.26" text-anchor="start">18K/5%</text>
<path class="s" stroke-width="1.3" d="M928.51 466.32V480.98M931.77 465.15V469.81M931.77 471.44V475.62M931.77 477.25V481.91M931.77 467.48H938.75V462.83M931.77 479.81H938.75V483.77M931.77 473.53H935.96V479.81"/>
<path class="w" d="M938.75 400.0 L938.75 463.29"/>
<path class="w" d="M938.75 483.3 L938.75 525.19"/>
<path class="gr" d="M938.75 525.19 L938.75 531.47"/>
<path class="gr" d="M932.47 531.47H945.03L938.75 537.29Z"/>
<text class="g" x="938.75" y="543.8" text-anchor="middle">PGND</text>
<text class="d" x="941.77" y="429.55" text-anchor="start">650V/88mΩ</text>
<text class="v" x="936.65" y="463.29" text-anchor="start" transform="rotate(-90 936.65 463.29)">NCE65TF099F</text>
<text class="d" x="940.15" y="455.85" text-anchor="start">MD1</text>
<text class="d" x="941.08" y="490.28" text-anchor="start">HS2</text>
<path stroke="#dc143c" stroke-width="1.1" fill="none" d="M941.77 459.8H966.67M954.57 459.8V485.63M941.77 485.63H966.67M954.57 465.85H966.67M954.57 472.13H966.67M954.57 478.42H966.67"/>
<path class="k" d="M954.57 465.85 L980.87 465.85"/>
<path class="k" d="M954.57 478.42 L980.87 478.42"/>
<text class="pn" x="948.75" y="467.94" text-anchor="middle">1</text>
<text class="pn" x="948.75" y="480.74" text-anchor="middle">2</text>
<path class="w" d="M980.87 452.35 L980.87 525.19"/>
<circle class="j" cx="980.87" cy="465.85" r="1.9"/>
<circle class="j" cx="980.87" cy="478.42" r="1.9"/>
<rect x="974.35" y="433.74" width="13.26" height="18.62" fill="#ffffb0" stroke="#800000" stroke-width="1.1"/>
<text class="d" x="988.31" y="437.23" text-anchor="start">HS1</text>
<path class="k" d="M979.0 446.07 L982.96 446.07"/>
<rect x="992.5" y="489.58" width="12.8" height="19.78" fill="#ffffb0" stroke="#800000" stroke-width="1.1"/>
<text class="d" x="1006.46" y="493.08" text-anchor="start">HS3</text>
<path class="k" d="M996.92 503.08 L1001.11 503.08"/>
<path class="k" d="M999.25 509.36 L999.25 525.19"/>
<path class="w" d="M1090.69 400.0 L1090.69 434.44"/>
<circle class="j" cx="1090.69" cy="434.44" r="1.9"/>
<path d="M1090.69 434.9V438.39M1087.2 438.39L1090.69 441.88L1094.18 438.39Z" stroke="#f00" fill="none" stroke-width="1"/>
<text class="g" x="1083.02" y="447.7" text-anchor="start" style="fill:#f00">PGND</text>
<text class="g" x="648.29" y="512.57" text-anchor="middle" style="fill:#f00">DC15V</text>
<path d="M645.26 515.13L648.29 518.39L651.31 515.13M648.29 518.39V522.11" stroke="#f00" fill="none" stroke-width="1"/>
<path class="w" d="M635.26 522.11 L674.35 522.11 L674.35 529.56"/>
<path class="w" d="M635.26 522.11 L635.26 533.05"/>
<path class="s" stroke-width="1.4" d="M631.54 533.05H638.98M631.54 536.07H638.98"/>
<path class="gr" d="M635.26 536.07 L635.26 548.17"/>
<path class="gr" d="M628.98 548.17H641.54L635.26 553.99Z"/>
<text class="g" x="635.26" y="559.81" text-anchor="middle">PGND</text>
<path class="w" d="M648.29 522.11 L648.29 529.56"/>
<path class="s" d="M648.29 529.56 L649.57 530.53 L647.01 532.47 L648.29 533.44 L649.57 534.4 L647.01 536.34 L648.29 537.31 L649.57 538.28 L647.01 540.22 L648.29 541.19"/>
<path class="w" d="M648.29 541.19 L648.29 560.97"/>
<path class="s" d="M674.35 529.56 L675.63 530.53 L673.07 532.47 L674.35 533.44 L675.63 534.4 L673.07 536.34 L674.35 537.31 L675.63 538.28 L673.07 540.22 L674.35 541.19"/>
<path class="w" d="M674.35 541.19 L674.35 548.17 L648.29 548.17"/>
<circle class="j" cx="648.29" cy="522.11" r="1.9"/>
<circle class="j" cx="648.29" cy="548.17" r="1.9"/>
<circle class="j" cx="648.29" cy="587.26" r="1.9"/>
<circle class="j" cx="622.46" cy="587.26" r="1.9"/>
<text class="d" x="613.39" y="533.51" text-anchor="start">C45</text>
<text class="v" x="609.9" y="539.8" text-anchor="start">1uF/25V</text>
<text class="d" x="650.62" y="533.51" text-anchor="start">RD9</text>
<text class="v" x="650.62" y="540.73" text-anchor="start">10R/5%</text>
<text class="d" x="676.91" y="533.51" text-anchor="start">RD10</text>
<text class="v" x="676.91" y="540.73" text-anchor="start">10R/5%</text>
<path class="s" stroke-width="1.6" d="M642.94 562.13V573.07"/><path class="s" d="M642.94 564.93L648.29 560.97M642.94 570.28L648.29 574.23"/>
<path d="M648.29 574.23L645.26 573.53L646.89 571.44Z" fill="#00f"/>
<path class="w" d="M622.46 567.49 L642.94 567.49"/>
<path class="w" d="M622.46 567.49 L622.46 606.34 L642.94 606.34"/>
<path class="w" d="M648.29 574.23 L648.29 600.53"/>
<path class="s" stroke-width="1.6" d="M642.94 601.22V612.16"/><path class="s" d="M642.94 604.02L648.29 600.06M642.94 609.37L648.29 613.32"/>
<path d="M642.94 604.02L645.96 604.02L644.8 601.22Z" fill="#00f"/>
<path class="w" d="M648.29 613.32 L648.29 627.29"/>
<path class="gr" d="M648.29 627.29 L648.29 632.41"/>
<path class="gr" d="M642.01 632.41H654.57L648.29 638.22Z"/>
<text class="g" x="648.29" y="643.57" text-anchor="middle">PGND</text>
<text class="d" x="651.08" y="565.62" text-anchor="start">Q1</text>
<text class="v" x="651.08" y="571.44" text-anchor="start">8050</text>
<text class="d" x="651.08" y="604.72" text-anchor="start">Q2</text>
<text class="v" x="651.08" y="610.53" text-anchor="start">8550</text>
<text class="pn" x="635.26" y="565.16" text-anchor="middle" style="font-size:4.5px">B</text>
<text class="pn" x="635.26" y="604.02" text-anchor="middle" style="font-size:4.5px">B</text>
<path class="w" d="M557.31 695.93 L557.31 587.26 L596.4 587.26"/>
<path class="s" d="M596.4 587.26 L597.37 585.98 L599.31 588.54 L600.28 587.26 L601.25 585.98 L603.19 588.54 L604.16 587.26 L605.13 585.98 L607.06 588.54 L608.03 587.26"/>
<path class="w" d="M608.03 587.26 L622.46 587.26"/>
<path class="w" d="M648.29 587.26 L800.0 587.26"/>
<text class="d" x="595.93" y="583.54" text-anchor="start">RD11</text>
<text class="v" x="596.4" y="593.78" text-anchor="start">15R/5%</text>
<path d="M422.12 609.02L424.65 609.02L425.53 607.04L426.41 609.02L428.93 609.02V641.79H422.12Z" fill="#f0dc6c" stroke="#a01818" stroke-width="1"/>
<text class="g" x="427.5" y="626.06" text-anchor="middle" transform="rotate(-90 427.5 626.06)" style="font-size:6px">DC300V</text>
<path d="M448.07 625.95L450.6 625.95L451.48 623.97L452.36 625.95L454.89 625.95V643.99H448.07Z" fill="#f0dc6c" stroke="#a01818" stroke-width="1"/>
<text class="g" x="453.46" y="635.63" text-anchor="middle" transform="rotate(-90 453.46 635.63)" style="font-size:6px">CS</text>
<path d="M598.06 609.02L600.59 609.02L601.47 607.04L602.35 609.02L604.88 609.02V628.59H598.06Z" fill="#f0dc6c" stroke="#a01818" stroke-width="1"/>
<text class="g" x="603.45" y="619.46" text-anchor="middle" transform="rotate(-90 603.45 619.46)" style="font-size:6px">VBus</text>
<path d="M638.31 678.73L640.84 678.73L641.72 676.76L642.6 678.73L645.13 678.73V706.67H638.31Z" fill="#f0dc6c" stroke="#a01818" stroke-width="1"/>
<text class="g" x="643.7" y="693.36" text-anchor="middle" transform="rotate(-90 643.7 693.36)" style="font-size:6px">DC15V</text>
<path class="w" d="M425.53 641.79 L425.53 658.28"/>
<path class="s" d="M425.53 658.28 L426.74 659.2 L424.32 661.03 L425.53 661.95 L426.74 662.86 L424.32 664.7 L425.53 665.61 L426.74 666.53 L424.32 668.36 L425.53 669.28"/>
<path class="w" d="M425.53 669.28 L425.53 684.67"/>
<path class="s" d="M425.53 684.67 L426.74 685.5 L424.32 687.15 L425.53 687.97 L426.74 688.8 L424.32 690.45 L425.53 691.27 L426.74 692.1 L424.32 693.75 L425.53 694.57"/>
<path class="w" d="M425.53 694.57 L425.53 709.97"/>
<path class="s" d="M425.53 709.97 L426.74 710.88 L424.32 712.71 L425.53 713.63 L426.74 714.55 L424.32 716.38 L425.53 717.3 L426.74 718.21 L424.32 720.05 L425.53 720.96"/>
<path class="w" d="M425.53 720.96 L425.53 748.45"/>
<path class="s" d="M425.53 748.45 L426.74 749.28 L424.32 750.93 L425.53 751.75 L426.74 752.58 L424.32 754.23 L425.53 755.05 L426.74 755.88 L424.32 757.52 L425.53 758.35"/>
<path class="w" d="M425.53 758.35 L425.53 780.34"/>
<path class="w" d="M451.48 643.99 L451.48 658.28"/>
<path class="s" d="M451.48 658.28 L452.69 659.2 L450.27 661.03 L451.48 661.95 L452.69 662.86 L450.27 664.7 L451.48 665.61 L452.69 666.53 L450.27 668.36 L451.48 669.28"/>
<path class="w" d="M451.48 669.28 L451.48 683.57"/>
<path class="s" d="M451.48 683.57 L452.69 684.49 L450.27 686.32 L451.48 687.24 L452.69 688.16 L450.27 689.99 L451.48 690.9 L452.69 691.82 L450.27 693.65 L451.48 694.57"/>
<path class="w" d="M451.48 694.57 L451.48 753.95"/>
<path class="s" stroke-width="1.4" d="M447.08 753.95H455.88M447.08 756.15H455.88"/>
<path class="w" d="M451.48 756.15 L451.48 780.34"/>
<path class="w" d="M425.53 780.34 L641.72 780.34"/>
<circle class="j" cx="438.28" cy="780.34" r="1.9"/>
<circle class="j" cx="451.48" cy="780.34" r="1.9"/>
<circle class="j" cx="464.67" cy="780.34" r="1.9"/>
<circle class="j" cx="477.87" cy="780.34" r="1.9"/>
<circle class="j" cx="510.2" cy="780.34" r="1.9"/>
<circle class="j" cx="562.1" cy="780.34" r="1.9"/>
<circle class="j" cx="575.3" cy="780.34" r="1.9"/>
<circle class="j" cx="588.49" cy="780.34" r="1.9"/>
<circle class="j" cx="601.47" cy="780.34" r="1.9"/>
<circle class="j" cx="615.33" cy="780.34" r="1.9"/>
<circle class="j" cx="628.52" cy="780.34" r="1.9"/>
<circle class="j" cx="425.53" cy="734.6" r="1.9"/>
<circle class="j" cx="438.28" cy="734.6" r="1.9"/>
<circle class="j" cx="451.48" cy="721.62" r="1.9"/>
<circle class="j" cx="464.67" cy="741.2" r="1.9"/>
<circle class="j" cx="562.1" cy="734.6" r="1.9"/>
<circle class="j" cx="588.49" cy="721.62" r="1.9"/>
<circle class="j" cx="601.47" cy="721.62" r="1.9"/>
<circle class="j" cx="628.52" cy="708.87" r="1.9"/>
<circle class="j" cx="641.72" cy="708.87" r="1.9"/>
<path class="w" d="M438.28 734.6 L438.28 753.95"/>
<path class="s" stroke-width="1.4" d="M433.88 753.95H442.68M433.88 756.15H442.68"/>
<path class="w" d="M438.28 756.15 L438.28 780.34"/>
<rect x="484.47" y="689.51" width="52.12" height="51.9" fill="#ffffb0" stroke="#800000" stroke-width="1.1"/>
<path class="k" d="M477.87 696.11 L484.47 696.11"/>
<path class="k" d="M536.59 696.11 L549.35 696.11"/>
<path class="k" d="M477.87 708.87 L484.47 708.87"/>
<path class="k" d="M536.59 708.87 L549.35 708.87"/>
<path class="k" d="M477.87 721.62 L484.47 721.62"/>
<path class="k" d="M536.59 721.62 L549.35 721.62"/>
<path class="k" d="M477.87 734.6 L484.47 734.6"/>
<path class="k" d="M536.59 734.6 L549.35 734.6"/>
<path class="w" d="M464.67 696.11 L477.87 696.11"/>
<path class="w" d="M464.67 696.11 L464.67 675.44 L484.47 675.44 L484.47 670.38"/>
<path class="gr" d="M477.87 669.94H491.06L484.47 663.78Z"/>
<text class="g" x="484.47" y="661.58" text-anchor="middle">PGND</text>
<path class="w" d="M464.67 708.87 L477.87 708.87"/>
<path class="w" d="M464.67 708.87 L464.67 748.45"/>
<path class="s" d="M464.67 748.45 L465.88 749.28 L463.46 750.93 L464.67 751.75 L465.88 752.58 L463.46 754.23 L464.67 755.05 L465.88 755.88 L463.46 757.52 L464.67 758.35"/>
<path class="w" d="M464.67 758.35 L464.67 780.34"/>
<path class="w" d="M464.67 741.2 L477.87 741.2 L477.87 753.95"/>
<path class="s" stroke-width="1.4" d="M473.47 753.95H482.27M473.47 756.15H482.27"/>
<path class="w" d="M477.87 756.15 L477.87 780.34"/>
<path class="w" d="M451.48 721.62 L477.87 721.62"/>
<path class="w" d="M425.53 734.6 L477.87 734.6"/>
<path d="M484.47 721.62L481.17 720.08V723.16ZM484.47 734.6L481.17 733.06V736.14Z" fill="#000"/>
<path class="w" d="M549.35 696.11 L557.48 696.11 L557.48 600.0"/>
<path class="w" d="M549.35 708.87 L641.72 708.87"/>
<path class="w" d="M549.35 721.62 L615.33 721.62 L615.33 753.95"/>
<path class="s" stroke-width="1.4" d="M610.93 753.95H619.72M610.93 756.15H619.72"/>
<path class="w" d="M615.33 756.15 L615.33 780.34"/>
<path class="w" d="M549.35 734.6 L575.3 734.6 L575.3 753.95"/>
<path class="s" stroke-width="1.4" d="M570.9 753.95H579.7M570.9 756.15H579.7"/>
<path class="w" d="M575.3 756.15 L575.3 780.34"/>
<path class="w" d="M562.1 734.6 L562.1 744.05"/>
<path class="s" d="M562.1 744.05 L563.31 744.88 L560.89 746.53 L562.1 747.35 L563.31 748.18 L560.89 749.83 L562.1 750.65 L563.31 751.48 L560.89 753.13 L562.1 753.95"/>
<path class="w" d="M562.1 753.95 L562.1 766.71"/>
<path class="s" stroke-width="1.4" d="M557.7 766.71H566.5M557.7 768.91H566.5"/>
<path class="w" d="M562.1 768.91 L562.1 780.34"/>
<path class="w" d="M588.49 721.62 L588.49 745.15"/>
<path class="s" d="M588.49 745.15 L589.7 745.89 L587.28 747.35 L588.49 748.09 L589.7 748.82 L587.28 750.29 L588.49 751.02 L589.7 751.75 L587.28 753.22 L588.49 753.95"/>
<path class="w" d="M588.49 753.95 L588.49 780.34"/>
<path class="w" d="M601.47 628.59 L601.47 645.09"/>
<path class="s" d="M601.47 645.09 L602.68 645.87 L600.26 647.45 L601.47 648.24 L602.68 649.03 L600.26 650.6 L601.47 651.39 L602.68 652.18 L600.26 653.75 L601.47 654.54"/>
<path class="w" d="M601.47 654.54 L601.47 668.18"/>
<path class="s" d="M601.47 668.18 L602.68 668.95 L600.26 670.49 L601.47 671.26 L602.68 672.03 L600.26 673.57 L601.47 674.34 L602.68 675.11 L600.26 676.65 L601.47 677.42"/>
<path class="w" d="M601.47 677.42 L601.47 691.27"/>
<path class="s" d="M601.47 691.27 L602.68 692.1 L600.26 693.75 L601.47 694.57 L602.68 695.39 L600.26 697.04 L601.47 697.87 L602.68 698.69 L600.26 700.34 L601.47 701.17"/>
<path class="w" d="M601.47 701.17 L601.47 745.15"/>
<path class="s" d="M601.47 745.15 L602.68 745.89 L600.26 747.35 L601.47 748.09 L602.68 748.82 L600.26 750.29 L601.47 751.02 L602.68 751.75 L600.26 753.22 L601.47 753.95"/>
<path class="w" d="M601.47 753.95 L601.47 780.34"/>
<path class="w" d="M628.52 708.87 L628.52 753.95"/>
<path class="s" stroke-width="1.4" d="M624.12 753.95H632.92M624.12 756.15H632.92"/>
<path class="w" d="M628.52 756.15 L628.52 780.34"/>
<path class="w" d="M641.72 706.67 L641.72 753.95"/>
<path class="s" stroke-width="1.4" d="M637.32 753.95H646.12M637.32 756.15H646.12"/>
<path class="w" d="M641.72 756.15 L641.72 780.34"/>
<path class="gr" d="M510.2 780.34 L510.2 786.5"/>
<path class="gr" d="M503.6 786.5H516.8L510.2 793.1Z"/>
<text class="g" x="510.2" y="798.38" text-anchor="middle">PGND</text>
<text class="d" x="484.03" y="687.31" text-anchor="start">U1</text>
<text class="v" x="484.69" y="746.91" text-anchor="start">NCP1654</text>
<text class="pn" x="488.43" y="697.87" text-anchor="start" style="font-size:6.5px">Gnd</text>
<text class="pn" x="488.43" y="710.62" text-anchor="start" style="font-size:6.5px">Vm</text>
<text class="pn" x="488.43" y="723.38" text-anchor="start" style="font-size:6.5px">Cs</text>
<text class="pn" x="488.43" y="736.36" text-anchor="start" style="font-size:6.5px">Bo</text>
<text class="pn" x="532.19" y="697.87" text-anchor="end" style="font-size:6.5px">Drv</text>
<text class="pn" x="532.19" y="710.62" text-anchor="end" style="font-size:6.5px">Vcc</text>
<text class="pn" x="532.19" y="723.38" text-anchor="end" style="font-size:6.5px">Fb</text>
<text class="pn" x="532.19" y="736.36" text-anchor="end" style="font-size:6.5px">Vcontrol</text>
<text class="pn" x="478.31" y="694.57" text-anchor="middle">1</text>
<text class="pn" x="478.31" y="707.33" text-anchor="middle">2</text>
<text class="pn" x="478.31" y="720.08" text-anchor="middle">3</text>
<text class="pn" x="478.31" y="733.06" text-anchor="middle">4</text>
<text class="pn" x="542.75" y="694.57" text-anchor="middle">8</text>
<text class="pn" x="542.75" y="707.33" text-anchor="middle">7</text>
<text class="pn" x="542.75" y="720.08" text-anchor="middle">6</text>
<text class="pn" x="542.75" y="733.06" text-anchor="middle">5</text>
<text class="d" x="406.83" y="661.58" text-anchor="start">RD14</text>
<text class="v" x="401.99" y="668.62" text-anchor="start">5.1M/5%</text>
<text class="d" x="406.83" y="687.31" text-anchor="start">RD17</text>
<text class="v" x="401.99" y="694.57" text-anchor="start">5.1M/5%</text>
<text class="d" x="406.83" y="713.26" text-anchor="start">RD19</text>
<text class="v" x="401.99" y="720.52" text-anchor="start">5.1M/5%</text>
<text class="d" x="406.83" y="750.65" text-anchor="start">RD20</text>
<text class="v" x="400.89" y="757.69" text-anchor="start">100K/5%</text>
<text class="d" x="454.78" y="656.74" text-anchor="start" transform="rotate(90 454.78 656.74)">RD13</text>
<text class="v" x="443.34" y="655.42" text-anchor="start" transform="rotate(90 443.34 655.42)">11K/5%</text>
<text class="d" x="454.78" y="683.13" text-anchor="start" transform="rotate(90 454.78 683.13)">RD16</text>
<text class="v" x="443.34" y="681.37" text-anchor="start" transform="rotate(90 443.34 681.37)">0R/5%</text>
<text class="d" x="437.18" y="774.84" text-anchor="start" transform="rotate(-90 437.18 774.84)">CD9</text>
<text class="v" x="445.54" y="778.14" text-anchor="start" transform="rotate(-90 445.54 778.14)">0.47uF/50V</text>
<text class="d" x="450.38" y="774.84" text-anchor="start" transform="rotate(-90 450.38 774.84)">CD8</text>
<text class="v" x="457.42" y="770.45" text-anchor="start" transform="rotate(-90 457.42 770.45)">NC</text>
<text class="d" x="462.47" y="763.85" text-anchor="start" transform="rotate(-90 462.47 763.85)">RD24</text>
<text class="v" x="470.17" y="763.85" text-anchor="start" transform="rotate(-90 470.17 763.85)">180K/1%</text>
<text class="d" x="478.53" y="751.75" text-anchor="start">CD6</text>
<text class="v" x="479.41" y="762.75" text-anchor="start">470pF/50V</text>
<text class="d" x="547.59" y="756.59" text-anchor="start" transform="rotate(-90 547.59 756.59)">RD21</text>
<text class="v" x="557.04" y="753.95" text-anchor="start" transform="rotate(-90 557.04 753.95)">0R/5%</text>
<text class="d" x="543.19" y="764.95" text-anchor="start">CD7</text>
<text class="v" x="534.39" y="774.84" text-anchor="start">2.2uF/50V</text>
<text class="d" x="568.04" y="727.56" text-anchor="start">CD5</text>
<text class="v" x="560.78" y="733.06" text-anchor="start">68pF/50V</text>
<text class="d" x="586.73" y="756.59" text-anchor="start" transform="rotate(-90 586.73 756.59)">RD22</text>
<text class="v" x="594.43" y="757.25" text-anchor="start" transform="rotate(-90 594.43 757.25)">18K/1%</text>
<text class="d" x="599.49" y="756.59" text-anchor="start" transform="rotate(-90 599.49 756.59)">RD23</text>
<text class="v" x="607.63" y="757.25" text-anchor="start" transform="rotate(-90 607.63 757.25)">10M/1%</text>
<text class="d" x="614.23" y="777.7" text-anchor="start" transform="rotate(-90 614.23 777.7)">CD10</text>
<text class="v" x="621.26" y="778.58" text-anchor="start" transform="rotate(-90 621.26 778.58)">1uF/50V</text>
<text class="d" x="627.42" y="777.7" text-anchor="start" transform="rotate(-90 627.42 777.7)">CD11</text>
<text class="v" x="634.46" y="778.58" text-anchor="start" transform="rotate(-90 634.46 778.58)">1uF/50V</text>
<text class="d" x="640.62" y="777.7" text-anchor="start" transform="rotate(-90 640.62 777.7)">CD12</text>
<text class="v" x="647.22" y="778.58" text-anchor="start" transform="rotate(-90 647.22 778.58)">1uF/50V</text>
<text class="d" x="584.1" y="647.72" text-anchor="start">RD12</text>
<text class="v" x="581.24" y="653.88" text-anchor="start">1M/1%</text>
<text class="d" x="583.44" y="669.72" text-anchor="start">RD15</text>
<text class="v" x="581.24" y="675.88" text-anchor="start">1M/1%</text>
<text class="d" x="583.44" y="693.47" text-anchor="start">RD18</text>
<text class="v" x="581.24" y="699.63" text-anchor="start">1M/1%</text>
<text x="640" y="161.5" textLength="120" lengthAdjust="spacingAndGlyphs" style="font-size:14px;font-weight:bold;fill:#f00">PFC功率因数校正</text>
<text x="630" y="181" textLength="78" lengthAdjust="spacingAndGlyphs" style="font-size:8px;font-weight:bold;fill:#00f">Boost最大功率300W</text>
<path d="M816.9 742.6H1096 M816.9 781.5H1096 M816.9 742.6V781.5 M840.8 742.6V781.5 M864.2 742.6V781.5 M910.4 742.6V781.5 M944.9 742.6V781.5 M971.5 742.6V781.5 M994.1 742.6V781.5 M1017 742.6V781.5 M1063 742.6V781.5 M816.9 781.5V859.7 M864.2 781.5V859.7 M971.5 781.5V859.7 " stroke="#000" stroke-width="1.6" fill="none"/>
<path d="M816.9 756.4H1096 M816.9 768.5H1096 M816.9 795H971.5 M816.9 807.9H971.5 M816.9 820.9H971.5 M816.9 833.9H971.5 M816.9 846.7H971.5 " stroke="#000" stroke-width="1" fill="none"/>
<text x="819" y="779" style="font-family:&quot;Noto Sans CJK SC&quot;,sans-serif;font-size:12px;fill:#000;fill:#888;font-size:9px" textLength="20" lengthAdjust="spacingAndGlyphs">标记</text>
<text x="841.5" y="779.5" style="font-family:&quot;Noto Sans CJK SC&quot;,sans-serif;font-size:12px;fill:#000" textLength="22" lengthAdjust="spacingAndGlyphs">数量</text>
<text x="865" y="779.5" style="font-family:&quot;Noto Sans CJK SC&quot;,sans-serif;font-size:12px;fill:#000" textLength="44.5" lengthAdjust="spacingAndGlyphs">更改单号</text>
<text x="913" y="779.5" style="font-family:&quot;Noto Sans CJK SC&quot;,sans-serif;font-size:12px;fill:#000" textLength="30" lengthAdjust="spacingAndGlyphs">签 名</text>
<text x="947" y="779.5" style="font-family:&quot;Noto Sans CJK SC&quot;,sans-serif;font-size:12px;fill:#000" textLength="23" lengthAdjust="spacingAndGlyphs">日期</text>
<text x="973.5" y="779" style="font-family:&quot;Noto Sans CJK SC&quot;,sans-serif;font-size:12px;fill:#000;fill:#888;font-size:9px" textLength="19" lengthAdjust="spacingAndGlyphs">标记</text>
<text x="995" y="779.5" style="font-family:&quot;Noto Sans CJK SC&quot;,sans-serif;font-size:12px;fill:#000" textLength="22" lengthAdjust="spacingAndGlyphs">数量</text>
<text x="1018" y="779.5" style="font-family:&quot;Noto Sans CJK SC&quot;,sans-serif;font-size:12px;fill:#000" textLength="44.5" lengthAdjust="spacingAndGlyphs">更改单号</text>
<text x="1066" y="779.5" style="font-family:&quot;Noto Sans CJK SC&quot;,sans-serif;font-size:12px;fill:#000" textLength="30" lengthAdjust="spacingAndGlyphs">签 名</text>
<text x="824" y="793" style="font-family:&quot;Noto Sans CJK SC&quot;,sans-serif;font-size:12px;fill:#000" textLength="35" lengthAdjust="spacing" xml:space="preserve">拟  制</text>
<text x="824" y="806" style="font-family:&quot;Noto Sans CJK SC&quot;,sans-serif;font-size:12px;fill:#000" textLength="35" lengthAdjust="spacing" xml:space="preserve">审  核</text>
<text x="824" y="819" style="font-family:&quot;Noto Sans CJK SC&quot;,sans-serif;font-size:12px;fill:#000" textLength="35" lengthAdjust="spacing" xml:space="preserve">标准化</text>
<text x="824" y="832" style="font-family:&quot;Noto Sans CJK SC&quot;,sans-serif;font-size:12px;fill:#000" textLength="35" lengthAdjust="spacing" xml:space="preserve">工  艺</text>
<text x="824" y="845" style="font-family:&quot;Noto Sans CJK SC&quot;,sans-serif;font-size:12px;fill:#000" textLength="35" lengthAdjust="spacing" xml:space="preserve">质  量</text>
<text x="824" y="858" style="font-family:&quot;Noto Sans CJK SC&quot;,sans-serif;font-size:12px;fill:#000" textLength="35" lengthAdjust="spacing" xml:space="preserve">批  准</text>
<text x="820.5" y="870" style="font-family:&quot;Noto Sans CJK SC&quot;,sans-serif;font-size:12px;fill:#000" textLength="31" lengthAdjust="spacingAndGlyphs">制图:</text>
<text x="972" y="870" style="font-family:&quot;Noto Sans CJK SC&quot;,sans-serif;font-size:12px;fill:#000" textLength="29" lengthAdjust="spacingAndGlyphs">描图:</text>
<text x="1010" y="824.5" style="font-family:&quot;Liberation Mono&quot;,&quot;Noto Sans CJK SC&quot;,monospace;font-size:13.5px;fill:#000080" textLength="78" lengthAdjust="spacingAndGlyphs">PFC校正电路</text></svg><div id="split" class="a"></div>
<div id="pcbwin" class="a"></div><svg id="pcbsvg" class="a" width="705" height="880" viewBox="1100 75 705 880"><defs><clipPath id="bc"><polygon points="1310.7,100.6 1632.9,28.4 1773.2,871.7 1401.4,911.2"/></clipPath><linearGradient id="bg" x1="0" y1="0" x2="1" y2="0.15"><stop offset="0" stop-color="#3a7a35"/><stop offset="0.12" stop-color="#2e6a37"/><stop offset="1" stop-color="#2b6338"/></linearGradient><pattern id="ht" width="2.4" height="2.4" patternUnits="userSpaceOnUse" patternTransform="rotate(-7)"><rect width="2.4" height="2.4" fill="#5a8b30"/><rect width="1.1" height="1.1" fill="#47782e"/></pattern><pattern id="vs" width="5.6" height="5.6" patternUnits="userSpaceOnUse" patternTransform="rotate(-7)"><rect width="5.6" height="5.6" fill="#588930"/><circle cx="2.8" cy="2.8" r="1.35" fill="#cdae42"/><circle cx="2.8" cy="2.8" r=".5" fill="#efe2b0"/></pattern></defs><polygon points="1310.7,100.6 1632.9,28.4 1773.2,871.7 1401.4,911.2" fill="url(#bg)"/><g clip-path="url(#bc)"><polyline class="cu" points="1360.8,124.5 1353.0,135.1 1356.5,169.2 1364.8,178.0" stroke-width="4.3"/>
<polyline class="cu" points="1419.0,132.2 1408.8,145.7 1404.8,168.1 1391.9,173.5" stroke-width="4.3"/>
<polyline class="cu" points="1370.7,203.4 1393.1,187.6 1415.4,190.0 1431.5,199.9" stroke-width="6.7"/>
<polyline class="cu" points="1431.5,199.9 1447.2,185.7 1462.6,181.0" stroke-width="5.5"/>
<polyline class="cu" points="1337.7,153.9 1371.9,153.9" stroke-width="3.7"/>
<polyline class="cu" points="1396.6,149.2 1424.9,150.9" stroke-width="3.7"/>
<polyline class="cu" points="1397.8,226.2 1387.2,239.9 1343.6,249.8 1333.5,259.9 1338.9,301.2" stroke-width="4.9"/>
<polyline class="cu" points="1370.7,256.9 1413.1,249.8" stroke-width="3.7"/>
<polyline class="cu" points="1556.8,182.2 1562.0,216.4 1574.5,301.2" stroke-width="9.2"/>
<polyline class="cu" points="1519.6,144.5 1533.2,129.2 1537.9,110.3" stroke-width="4.3"/>
<polyline class="cu" points="1507.3,188.1 1520.3,190.4 1522.6,206.9 1526.2,301.2" stroke-width="4.3"/>
<polyline class="cu" points="1506.1,216.4 1513.2,225.8 1519.1,301.2" stroke-width="3.1"/>
<polyline class="cu" points="1445.6,252.9 1431.9,270.5 1370.7,280.0 1358.9,287.0" stroke-width="5.5"/>
<polyline class="cu" points="1431.9,270.5 1462.6,275.2" stroke-width="5.5"/>
<polyline class="cu" points="1334.9,110.3 1333.0,122.1 1335.8,145.7" stroke-width="3.1"/>
<polygon points="1460.2,182.2 1464.9,177.5 1505.0,173.5 1508.5,178.7 1510.1,192.8 1507.3,206.9 1505.0,254.0 1502.6,301.2 1474.3,301.2 1469.6,263.5 1462.6,206.9" fill="url(#vs)"/>
<polyline class="cu" points="1342.7,280.0 1345.2,337.8 1352.7,344.1 1420.6,336.5 1428.1,340.3 1430.6,362.9" stroke-width="4.6"/>
<polyline class="cu" points="1430.1,287.5 1424.3,295.1 1428.1,336.5" stroke-width="3.3"/>
<polyline class="cu" points="1430.1,299.6 1440.7,302.6 1445.7,343.3" stroke-width="2.6"/>
<polyline class="cu" points="1365.3,387.5 1369.0,366.7 1418.0,360.4 1424.3,366.7 1425.6,380.5" stroke-width="3.9"/>
<polyline class="cu" points="1352.7,403.1 1357.7,420.7 1385.4,427.0 1440.7,422.0 1450.7,405.6 1485.9,362.9" stroke-width="7.2"/>
<polyline class="cu" points="1485.9,362.9 1497.2,355.4" stroke-width="5.2"/>
<polyline class="cu" points="1391.7,383.0 1392.9,400.6 1367.8,420.7" stroke-width="3.3"/>
<polyline class="cu" points="1524.8,360.9 1537.4,357.9 1539.9,342.8" stroke-width="3.9"/>
<polyline class="cu" points="1561.3,280.0 1563.8,305.1 1576.3,308.9 1575.1,282.5" stroke-width="6.5"/>
<polyline class="cu" points="1576.3,308.9 1557.5,320.2" stroke-width="5.2"/>
<polyline class="cu" points="1443.2,422.0 1485.9,419.4 1495.9,413.2 1541.2,414.4 1561.3,405.6 1593.9,403.1" stroke-width="4.6"/>
<polyline class="cu" points="1551.2,357.9 1621.6,398.1 1686.9,471.0" stroke-width="3.9"/>
<polyline class="cu" points="1531.1,430.8 1548.7,433.3" stroke-width="4.6"/>
<polyline class="cu" points="1352.7,405.6 1356.5,440.8 1367.8,453.4 1372.8,521.2" stroke-width="3.9"/>
<polyline class="cu" points="1364.0,440.8 1385.4,443.3 1388.4,458.4" stroke-width="3.3"/>
<polyline class="cu" points="1558.7,471.0 1561.3,501.1 1543.7,521.2" stroke-width="3.3"/>
<polyline class="cu" points="1470.8,486.0 1536.1,481.0 1551.2,455.9 1619.0,447.1 1681.9,467.2 1694.4,521.2" stroke-width="3.3"/>
<polyline class="cu" points="1475.8,493.6 1533.6,488.5 1561.3,471.0" stroke-width="3.9"/>
<polyline class="cu" points="1586.4,476.0 1593.9,506.1 1591.4,521.2" stroke-width="2.6"/>
<polyline class="cu" points="1627.3,494.3 1624.1,521.2" stroke-width="2.6"/>
<polygon points="1458.2,283.8 1470.8,280.0 1523.6,280.0 1523.6,303.9 1526.6,337.8 1523.6,346.6 1465.8,352.9 1460.8,325.2" fill="url(#ht)"/>
<polygon points="1470.8,385.5 1531.1,379.2 1533.6,400.6 1470.8,405.6" fill="url(#ht)"/>
<polygon points="1506.0,385.5 1531.1,383.0 1532.4,400.6 1507.2,402.6" fill="url(#vs)"/>
<polygon points="1506.0,427.0 1528.6,424.5 1533.6,478.5 1513.5,481.0" fill="url(#vs)"/>
<polygon points="1450.7,460.9 1465.8,455.9 1531.1,453.4 1534.9,478.5 1528.6,486.0 1470.8,491.1 1453.2,478.5" fill="url(#ht)"/>
<polygon points="1416.8,438.3 1433.1,434.5 1440.7,491.1 1403.0,498.6 1395.4,481.0 1418.0,471.0" fill="url(#ht)"/>
<polygon points="1472.1,280.0 1494.7,280.0 1495.9,302.6 1475.8,305.1" fill="url(#vs)"/>
<polyline class="cu" points="1365.1,490.0 1370.2,530.2 1371.4,590.5 1380.2,650.8 1387.7,658.3 1515.9,643.3 1521.7,641.5" stroke-width="5.2"/>
<polyline class="cu" points="1394.0,497.5 1396.5,522.7 1460.6,527.7 1477.7,543.5" stroke-width="7.2"/>
<polyline class="cu" points="1397.8,522.7 1399.0,585.5 1470.7,575.4 1482.7,579.7" stroke-width="7.2"/>
<polyline class="cu" points="1397.8,590.5 1399.0,630.7" stroke-width="4.6"/>
<polyline class="cu" points="1513.4,529.7 1495.8,552.8 1490.8,560.9" stroke-width="2.0"/>
<polyline class="cu" points="1424.2,518.1 1513.4,513.9 1533.5,530.2 1561.1,497.5 1563.6,490.0" stroke-width="2.6"/>
<polyline class="cu" points="1517.1,557.3 1533.5,530.2" stroke-width="3.3"/>
<polyline class="cu" points="1490.8,565.4 1556.6,557.8" stroke-width="2.0"/>
<polyline class="cu" points="1583.0,549.8 1533.5,603.1 1536.0,626.4" stroke-width="2.6"/>
<polyline class="cu" points="1583.0,556.3 1558.6,585.5 1563.6,625.7 1556.1,637.0 1535.2,640.3" stroke-width="2.6"/>
<polyline class="cu" points="1567.6,591.8 1591.3,608.1 1603.8,605.6 1610.1,595.5 1605.8,569.9 1593.8,490.0" stroke-width="2.6"/>
<polyline class="cu" points="1565.4,577.7 1576.2,565.4" stroke-width="2.0"/>
<polyline class="cu" points="1591.3,598.8 1597.5,590.5 1591.3,540.3 1567.4,490.0" stroke-width="2.0"/>
<polyline class="cu" points="1617.6,632.0 1613.9,610.6 1618.9,580.5 1628.9,576.7" stroke-width="4.6"/>
<polyline class="cu" points="1618.9,490.0 1623.9,540.3 1628.9,575.4" stroke-width="3.3"/>
<polyline class="cu" points="1623.4,670.2 1654.1,691.0 1657.3,690.3" stroke-width="3.9"/>
<polyline class="cu" points="1526.7,679.7 1531.0,711.1 1548.5,731.2" stroke-width="4.6"/>
<polyline class="cu" points="1551.1,700.1 1615.1,699.0" stroke-width="2.0"/>
<polyline class="cu" points="1551.1,700.1 1586.2,696.0 1616.4,723.7 1654.1,722.4" stroke-width="2.6"/>
<polyline class="cu" points="1651.6,515.1 1656.6,540.3 1664.1,608.1" stroke-width="3.9"/>
<polyline class="cu" points="1690.5,518.1 1686.7,490.0" stroke-width="3.3"/>
<polyline class="cu" points="1671.2,521.4 1666.6,490.0" stroke-width="3.3"/>
<polyline class="cu" points="1709.3,550.3 1714.4,600.6" stroke-width="3.3"/>
<polyline class="cu" points="1482.7,579.7 1490.8,603.1" stroke-width="2.6"/>
<polygon points="1649.0,693.5 1686.7,686.0 1691.8,731.2 1659.1,731.2" fill="url(#ht)"/>
<polygon points="1716.9,691.0 1740.0,688.5 1740.0,731.2 1721.9,731.2" fill="url(#vs)"/>
<polygon points="1400.1,772.9 1420.2,770.4 1422.7,808.1 1447.8,804.3 1560.9,795.5 1558.4,735.2 1570.9,727.7 1572.2,798.0 1583.5,815.6 1586.0,830.7 1606.1,840.8 1666.4,830.7 1668.9,825.7 1756.9,821.9 1761.9,865.9 1709.1,875.9 1576.0,891.0 1447.8,906.1 1412.6,903.6" fill="url(#ht)"/>
<polygon points="1560.9,820.7 1566.4,820.2 1572.2,891.0 1566.4,891.8" fill="#2c6637"/>
<polygon points="1422.7,750.3 1452.8,746.5 1460.4,772.9 1465.4,808.1 1422.7,810.6" fill="url(#ht)"/>
<polygon points="1505.6,772.9 1576.0,765.4 1581.0,810.6 1493.0,815.6 1493.0,800.6 1506.9,798.0" fill="url(#vs)"/>
<polygon points="1553.3,739.0 1569.7,737.7 1572.2,765.4 1555.9,767.9" fill="url(#vs)"/>
<polygon points="1400.1,775.4 1420.2,772.9 1425.2,898.5 1410.1,899.8" fill="url(#vs)"/>
<polygon points="1576.0,865.9 1666.4,853.3 1668.9,875.9 1578.5,888.5" fill="url(#vs)"/>
<polygon points="1724.2,775.4 1756.9,765.4 1759.4,805.6 1726.7,810.6" fill="url(#vs)"/>
<polygon points="1721.7,692.5 1744.3,690.0 1748.1,715.1 1724.2,717.6" fill="url(#vs)"/>
<polygon points="1660.1,697.5 1699.1,692.5 1709.1,815.6 1668.9,820.7" fill="#4f8030"/>
<polygon points="1667.7,860.9 1705.4,855.8 1706.6,874.7 1670.2,878.9" fill="#5d8c2e"/>
<polygon points="1722.9,857.1 1761.9,852.1 1763.1,869.6 1725.5,873.4" fill="#5d8c2e"/>
<polyline class="cu" points="1508.1,732.7 1525.7,731.5 1530.7,747.8" stroke-width="8.5"/>
<polyline class="cu" points="1423.9,743.3 1436.5,759.1 1450.3,765.4" stroke-width="7.2"/>
<polyline class="cu" points="1529.5,690.0 1533.2,713.9 1553.3,731.5 1558.4,740.3" stroke-width="3.3"/>
<polyline class="cu" points="1551.6,700.1 1578.5,697.5 1636.3,742.0" stroke-width="2.3"/>
<polyline class="cu" points="1614.9,699.3 1633.7,700.1 1646.3,722.7 1658.9,721.4" stroke-width="2.3"/>
<polyline class="cu" points="1585.5,734.0 1591.0,790.5 1648.8,789.2 1661.4,795.5 1665.2,821.2" stroke-width="2.9"/>
<polyline class="cu" points="1581.0,734.0 1588.5,805.6 1603.6,807.3" stroke-width="2.3"/>
<polyline class="cu" points="1573.4,730.2 1601.1,725.2 1603.1,740.3" stroke-width="2.3"/>
<polyline class="cu" points="1625.7,761.6 1653.8,765.4 1657.6,781.0" stroke-width="2.3"/>
<polyline class="cu" points="1611.9,774.9 1651.3,771.7 1663.9,780.5 1670.2,813.1 1686.5,818.9" stroke-width="2.6"/>
<polyline class="cu" points="1622.4,808.8 1609.4,834.0" stroke-width="2.0"/>
<polyline class="cu" points="1603.6,807.3 1636.3,798.0 1638.3,816.9 1641.3,833.2" stroke-width="2.0"/>
<polygon class="sk" points="1320.7,147.3 1349.4,141.1 1354.7,185.7 1325.7,191.8"/>
<polyline points="1348.5,158.4 1349.9,170.6" fill="none" stroke="#fff" stroke-width="2.8"/>
<path class="sk" d="M1363.7 150.6A8.2 8.2 0 0 1 1380.0 152.5L1376.5 182.0A8.2 8.2 0 0 1 1360.1 180.0Z"/>
<path class="sk" d="M1388.9 144.6A8.2 8.2 0 0 1 1405.2 146.7L1401.2 177.8A8.2 8.2 0 0 1 1384.9 175.7Z"/>
<polygon class="sk" points="1410.3,146.9 1438.2,140.9 1446.5,204.1 1418.3,209.9"/>
<path class="sk" d="M1369.9 217.6A6.8 6.8 0 0 1 1366.7 204.3L1398.5 196.7A6.8 6.8 0 0 1 1401.7 210.0Z"/>
<polygon class="sk" points="1335.8,194.0 1348.1,191.4 1351.4,219.2 1339.0,221.7"/>
<polygon class="sk" points="1361.7,227.0 1424.3,214.2 1429.1,251.7 1366.1,264.2"/>
<path class="sk" d="M1440.4 223.6A8.0 8.0 0 0 1 1456.4 224.2L1455.2 256.7A8.0 8.0 0 0 1 1439.2 256.1Z"/>
<polygon class="sk" points="1404.8,110.3 1429.4,104.9 1431.5,120.9 1406.9,126.3"/>
<polygon class="sk" points="1442.1,110.3 1492.3,99.4 1501.4,164.1 1450.6,174.7"/>
<polygon class="sk" points="1499.8,110.3 1528.9,104.0 1535.1,146.1 1505.8,152.3"/>
<polygon class="sk" points="1539.1,110.3 1619.2,93.1 1624.6,126.4 1544.0,143.4"/>
<polygon class="sk" points="1543.4,151.6 1617.9,135.9 1619.9,148.5 1545.2,164.0"/>
<polygon class="sk" points="1550.9,170.4 1614.5,157.3 1618.5,182.7 1554.7,195.6"/>
<polygon class="sk" points="1484.5,208.1 1499.5,205.0 1504.5,240.4 1489.3,243.4"/>
<polygon class="sk" points="1492.0,268.2 1508.1,265.0 1513.2,301.2 1497.0,304.2"/>
<polyline points="1364.8,122.1 1368.3,129.7 1387.2,127.3 1390.7,119.8" fill="none" stroke="#fff" stroke-width="1"/>
<polyline points="1460.2,150.4 1464.9,145.7 1469.6,146.9 1473.2,145.0 1476.7,146.1 1480.2,143.8" fill="none" stroke="#fff" stroke-width="1"/>
<polyline points="1453.1,116.2 1460.2,120.9 1464.9,118.6 1469.6,120.2 1475.5,117.4" fill="none" stroke="#fff" stroke-width="1"/>
<circle class="sk" cx="1586.2" cy="254.5" r="27.8" stroke-width="1.6"/>
<path class="sk" stroke-width="1.6" d="M1629.4 270.2A45.9 45.9 0 0 1 1548.2 280.2"/>
<path class="sk" stroke-width="1.6" d="M1543.1 238.8A45.9 45.9 0 0 1 1624.3 228.8"/>
<polyline points="1517.9,206.9 1536.8,204.1 1542.7,239.9 1555.6,249.3 1558.0,263.5 1546.2,275.2 1549.7,301.2" fill="none" stroke="#fff" stroke-width="1"/>
<polyline points="1517.9,206.9 1520.3,218.7 1527.3,217.8 1529.0,228.1 1521.5,229.3 1523.8,239.9 1532.1,238.7 1535.6,254.0 1526.2,255.9" fill="none" stroke="#fff" stroke-width="1"/>
<polyline points="1619.2,189.3 1639.2,185.7 1647.5,235.2 1634.5,242.3 1638.1,254.0 1651.0,251.7 1658.1,298.8" fill="none" stroke="#fff" stroke-width="1"/>
<polyline points="1619.2,189.3 1623.2,214.0 1628.6,225.8 1616.9,239.9 1615.7,261.1 1629.8,275.2 1633.4,301.2" fill="none" stroke="#fff" stroke-width="1"/>
<text x="1588.6" y="250.5" fill="#fff" font-size="5.4" font-weight="normal" text-anchor="middle" transform="rotate(-5 1588.6 250.5)">PQ32/30_12P</text>
<circle class="sk" cx="1369.5" cy="309.6" r="30.7" stroke-width="1.5"/>
<path class="sk" stroke-width=".7" d="M1349.2 286.1L1356.3 336.8M1345.7 289.6L1351.9 334.1M1342.6 294.0L1347.7 330.4M1340.3 299.3L1344.0 325.8"/>
<circle class="sk" cx="1378.3" cy="386.0" r="31.9" stroke-width="1.5"/>
<path class="sk" stroke-width=".7" d="M1357.2 361.5L1364.6 414.3M1353.5 365.1L1360.0 411.5M1350.3 369.7L1355.6 407.7M1347.8 375.3L1351.7 402.8"/>
<circle class="sk" cx="1431.4" cy="389.8" r="10.6" stroke-width="1.1"/>
<circle class="sk" cx="1558.7" cy="471.0" r="11.3" stroke-width="1.1"/>
<circle class="sk" cx="1636.6" cy="493.6" r="19.6" stroke-width="1.5"/>
<path class="sk" stroke-width=".7" d="M1623.6 478.5L1628.2 510.9M1621.4 480.7L1625.4 509.2M1619.4 483.6L1622.7 506.9M1617.9 487.0L1620.3 503.9"/>
<circle class="sk" cx="1681.9" cy="518.7" r="23.9" stroke-width="1.5"/>
<path class="sk" stroke-width=".7" d="M1666.0 500.3L1671.6 539.8M1663.3 503.1L1668.2 537.7M1660.9 506.5L1664.9 534.9M1659.0 510.6L1661.9 531.2"/>
<circle class="sk" cx="1605.2" cy="375.0" r="28.1" stroke-width="1.6"/>
<path class="sk" stroke-width="1.6" d="M1650.6 391.5A48.2 48.2 0 0 1 1565.2 402.0"/>
<path class="sk" stroke-width="1.6" d="M1559.9 358.5A48.2 48.2 0 0 1 1645.2 348.0"/>
<text x="1606.5" y="376.7" fill="#fff" font-size="5.4" font-weight="normal" text-anchor="middle" transform="rotate(-5 1606.5 376.7)">PQ32/30_12P</text>
<path class="sk" stroke-width="1.2" d="M1624.0 270.7A42.7 42.7 0 0 1 1543.7 270.7"/>
<polygon class="sk" points="1497.9,345.8 1513.7,342.9 1519.0,381.0 1503.1,383.8"/>
<polyline points="1500.7,347.1 1505.0,382.5" fill="none" stroke="#e8eef2" stroke-width="4.5"/>
<polygon class="sk" points="1467.0,437.0 1501.0,431.2 1504.0,453.4 1469.9,459.1"/>
<polyline points="1467.5,454.9 1505.2,448.6" fill="none" stroke="#e8eef2" stroke-width="4.8"/>
<polygon class="sk" points="1379.1,450.9 1412.8,445.0 1415.5,467.2 1381.7,472.9"/>
<polyline points="1379.8,468.2 1416.5,462.4" fill="none" stroke="#e8eef2" stroke-width="4.8"/>
<path class="sk" d="M1464.0 331.0A2.0 2.0 0 0 1 1463.5 327.0L1518.3 319.5A2.0 2.0 0 0 1 1518.8 323.4Z"/>
<path class="sk" d="M1464.8 348.6A2.0 2.0 0 0 1 1464.3 344.6L1494.4 340.8A2.0 2.0 0 0 1 1494.9 344.8Z"/>
<path class="sk" d="M1467.3 364.9A2.0 2.0 0 0 1 1466.8 360.9L1490.7 357.9A2.0 2.0 0 0 1 1491.2 361.9Z"/>
<path class="sk" d="M1469.8 381.2A2.0 2.0 0 0 1 1469.3 377.3L1500.7 373.0A2.0 2.0 0 0 1 1501.2 377.0Z"/>
<path class="sk" d="M1472.3 396.3A2.0 2.0 0 0 1 1471.8 392.3L1494.5 389.8A2.0 2.0 0 0 1 1494.9 393.8Z"/>
<path class="sk" d="M1474.9 412.6A2.0 2.0 0 0 1 1474.3 408.7L1530.8 400.6A2.0 2.0 0 0 1 1531.4 404.6Z"/>
<path class="sk" d="M1478.1 315.9A2.0 2.0 0 0 1 1477.5 311.9L1512.0 306.9A2.0 2.0 0 0 1 1512.6 310.9Z"/>
<path class="sk" d="M1433.9 437.2A1.8 1.8 0 0 1 1437.4 436.8L1443.7 490.9A1.8 1.8 0 0 1 1440.2 491.3Z"/>
<path class="sk" d="M1442.2 437.2A1.8 1.8 0 0 1 1445.7 436.8L1451.9 490.9A1.8 1.8 0 0 1 1448.5 491.3Z"/>
<path class="sk" d="M1354.5 451.0A1.3 1.3 0 0 1 1357.0 450.7L1363.5 503.5A1.3 1.3 0 0 1 1361.0 503.8Z"/>
<path class="sk" d="M1460.5 463.7A2.3 2.3 0 0 1 1465.0 463.2L1467.5 485.8A2.3 2.3 0 0 1 1463.0 486.3Z"/>
<path class="sk" d="M1481.1 463.7A2.3 2.3 0 0 1 1485.6 463.2L1488.1 485.8A2.3 2.3 0 0 1 1483.6 486.3Z"/>
<path class="sk" d="M1497.5 463.7A2.3 2.3 0 0 1 1501.9 463.2L1504.5 485.8A2.3 2.3 0 0 1 1500.0 486.3Z"/>
<path class="sk" d="M1517.3 424.6A1.3 1.3 0 0 1 1519.8 424.3L1526.1 480.9A1.3 1.3 0 0 1 1523.6 481.1Z"/>
<path class="sk" d="M1375.8 473.6A2.0 2.0 0 0 1 1379.8 473.3L1382.4 500.9A2.0 2.0 0 0 1 1378.3 501.3Z"/>
<path class="sk" d="M1392.2 473.6A2.0 2.0 0 0 1 1396.2 473.3L1398.7 500.9A2.0 2.0 0 0 1 1394.7 501.3Z"/>
<path class="sk" d="M1408.5 473.6A2.0 2.0 0 0 1 1412.5 473.3L1415.0 500.9A2.0 2.0 0 0 1 1411.0 501.3Z"/>
<path class="sk" d="M1424.8 473.6A2.0 2.0 0 0 1 1428.8 473.3L1431.3 500.9A2.0 2.0 0 0 1 1427.3 501.3Z"/>
<polyline points="1531.1,280.0 1551.2,280.0" fill="none" stroke="#fff" stroke-width="1"/>
<polyline points="1532.4,282.5 1536.1,317.7 1548.7,316.4 1544.9,280.0" fill="none" stroke="#fff" stroke-width="1"/>
<polyline points="1541.2,326.5 1552.5,324.7 1558.7,352.9 1573.8,373.0 1575.1,388.0 1561.3,403.1 1570.1,440.8 1551.2,443.8" fill="none" stroke="#fff" stroke-width="1"/>
<polyline points="1541.2,326.5 1536.1,335.3 1537.4,346.6 1543.7,345.8 1544.9,356.6 1538.6,357.4 1539.9,376.7 1558.7,374.2 1561.3,389.3 1544.9,391.8 1547.4,405.6 1551.2,405.1 1554.2,425.7 1548.7,427.0 1551.2,443.8" fill="none" stroke="#fff" stroke-width="1"/>
<polyline points="1639.1,310.2 1659.2,306.4 1661.8,320.2 1656.2,321.5 1658.0,337.8 1665.5,336.5 1668.0,352.9 1646.7,357.9 1634.1,362.9 1636.6,376.7 1649.2,383.0 1669.3,373.0 1675.6,423.2 1658.0,427.0 1639.1,310.2" fill="none" stroke="#fff" stroke-width="1"/>
<polyline points="1634.1,280.0 1636.6,300.1 1658.0,296.3 1655.5,280.0" fill="none" stroke="#fff" stroke-width="1"/>
<polyline points="1362.8,511.2 1375.3,509.9 1376.6,514.9 1390.4,512.4 1389.1,507.4 1403.0,506.1 1405.5,514.9 1430.6,509.9 1429.3,502.4 1458.2,498.6 1460.8,509.9" fill="none" stroke="#fff" stroke-width="1"/>
<circle class="sk" cx="1416.6" cy="557.8" r="22.6" stroke-width="1.6"/>
<path class="sk" stroke-width="1.6" d="M1431.6 522.7A38.2 38.2 0 0 1 1439.6 588.3"/>
<path class="sk" stroke-width="1.6" d="M1401.7 593.0A38.2 38.2 0 0 1 1393.6 527.3"/>
<text x="1415.4" y="559.1" fill="#fff" font-size="5.4" font-weight="normal" text-anchor="middle" transform="rotate(83 1415.4 559.1)">PQ26/25_12P</text>
<circle class="sk" cx="1449.8" cy="682.2" r="28.1" stroke-width="1.6"/>
<path class="sk" stroke-width="1.6" d="M1468.9 637.1A49.0 49.0 0 0 1 1479.3 721.3"/>
<path class="sk" stroke-width="1.6" d="M1430.7 727.3A49.0 49.0 0 0 1 1420.3 643.1"/>
<text x="1449.8" y="683.5" fill="#fff" font-size="5.4" font-weight="normal" text-anchor="middle" transform="rotate(83 1449.8 683.5)">PQ32/30_12P</text>
<circle class="sk" cx="1680.5" cy="646.5" r="18.8" stroke-width="1.6"/>
<path class="sk" stroke-width="1.6" d="M1694.8 615.8A33.9 33.9 0 0 1 1701.8 672.9"/>
<path class="sk" stroke-width="1.6" d="M1666.1 677.3A33.9 33.9 0 0 1 1659.1 620.2"/>
<text x="1705.6" y="645.8" fill="#fff" font-size="5" font-weight="normal" text-anchor="middle" transform="rotate(83 1705.6 645.8)">PQ20/20_14P</text>
<polyline points="1362.1,513.9 1372.7,512.1 1373.9,517.1 1390.3,514.6 1389.0,508.8 1415.4,505.6 1416.6,512.6 1431.7,510.6 1430.5,502.6 1456.8,498.8 1460.6,512.6 1427.9,517.6 1422.9,527.7 1407.8,529.7 1394.0,522.7 1363.9,527.2 1362.1,513.9" fill="none" stroke="#fff" stroke-width="1"/>
<polyline points="1372.7,605.6 1402.8,601.1 1407.8,593.0 1422.9,591.0 1438.0,595.5 1469.4,591.0 1471.9,604.3 1456.8,606.1 1457.6,610.6 1440.5,612.6 1440.0,606.1 1415.4,609.3 1415.9,615.1 1401.6,616.9 1400.8,610.6 1386.5,612.6 1387.2,618.6 1375.2,620.2 1372.7,605.6" fill="none" stroke="#fff" stroke-width="1"/>
<polyline points="1381.5,625.7 1399.0,623.2 1399.8,629.4 1414.1,627.7 1413.4,620.7 1434.2,618.1 1436.7,638.2 1450.6,636.2 1466.9,625.7 1465.6,614.4 1480.7,612.6 1482.0,616.9 1488.2,615.6 1487.7,611.1 1495.8,610.1 1504.6,618.1 1505.8,628.2 1458.1,639.5 1454.3,649.5 1439.2,652.1 1427.9,640.8 1385.2,647.0 1381.5,625.7" fill="none" stroke="#fff" stroke-width="1"/>
<path class="sk" d="M1470.0 549.7A9.4 9.4 0 0 1 1488.8 548.4L1490.6 574.8A9.4 9.4 0 0 1 1471.8 576.1Z"/>
<path class="sk" d="M1513.4 654.5A10.1 10.1 0 0 1 1533.4 652.1L1535.4 668.4A10.1 10.1 0 0 1 1515.5 670.9Z"/>
<path class="sk" d="M1609.4 643.2A10.1 10.1 0 0 1 1629.4 640.9L1631.4 658.5A10.1 10.1 0 0 1 1611.4 660.7Z"/>
<circle class="sk" cx="1681.2" cy="520.2" r="25.1" stroke-width="1.5"/>
<path class="sk" stroke-width=".7" d="M1664.5 500.8L1670.4 542.4M1661.7 503.7L1666.8 540.2M1659.1 507.3L1663.3 537.2M1657.2 511.7L1660.2 533.4"/>
<circle class="sk" cx="1636.5" cy="495.5" r="18.8" stroke-width="1.5"/>
<path class="sk" stroke-width=".7" d="M1624.0 481.0L1628.4 512.2M1621.8 483.2L1625.7 510.5M1619.9 485.9L1623.1 508.3M1618.5 489.2L1620.8 505.4"/>
<circle class="sk" cx="1635.2" cy="576.7" r="12.1" stroke-width="1.1"/>
<circle class="sk" cx="1672.9" cy="713.6" r="16.3" stroke-width="1.5"/>
<path class="sk" stroke-width=".7" d="M1662.1 701.1L1665.9 728.1M1660.2 702.9L1663.5 726.6M1658.6 705.3L1661.3 724.7M1657.3 708.1L1659.3 722.2"/>
<polyline points="1630.2,609.3 1719.4,596.8 1721.4,608.1 1699.3,611.9 1691.8,623.2 1676.7,625.7 1675.4,614.4 1632.7,621.9 1630.2,609.3" fill="none" stroke="#fff" stroke-width="1"/>
<polyline points="1641.5,682.2 1669.1,677.2 1680.5,673.4 1689.2,672.9 1690.5,688.5 1732.0,681.5 1729.9,669.6 1691.8,675.4" fill="none" stroke="#fff" stroke-width="1"/>
<polyline points="1641.5,682.2 1644.0,696.0 1676.7,691.0" fill="none" stroke="#fff" stroke-width="1"/>
<polygon class="sk" points="1701.8,706.1 1717.5,704.0 1721.9,731.2 1706.1,733.2"/>
<polyline points="1716.1,705.6 1719.9,731.2" fill="none" stroke="#e8eef2" stroke-width="4.5"/>
<circle class="sk" cx="1427.2" cy="851.3" r="19.3" stroke-width="1.5"/>
<path class="sk" stroke-width=".7" d="M1414.4 836.4L1418.9 868.4M1412.2 838.6L1416.1 866.7M1410.2 841.4L1413.4 864.4M1408.7 844.8L1411.1 861.5"/>
<circle class="sk" cx="1476.7" cy="845.0" r="19.3" stroke-width="1.5"/>
<path class="sk" stroke-width=".7" d="M1463.9 830.1L1468.4 862.1M1461.7 832.4L1465.6 860.4M1459.7 835.1L1462.9 858.1M1458.2 838.5L1460.6 855.2"/>
<circle class="sk" cx="1528.2" cy="839.5" r="19.3" stroke-width="1.5"/>
<path class="sk" stroke-width=".7" d="M1515.4 824.6L1519.9 856.6M1513.2 826.8L1517.1 854.9M1511.2 829.6L1514.4 852.6M1509.7 833.0L1512.1 849.7"/>
<circle class="sk" cx="1456.1" cy="882.2" r="19.3" stroke-width="1.5"/>
<path class="sk" stroke-width=".7" d="M1443.3 867.3L1447.8 899.3M1441.0 869.5L1445.0 897.6M1439.1 872.3L1442.3 895.3M1437.6 875.7L1440.0 892.4"/>
<circle class="sk" cx="1506.9" cy="877.9" r="19.3" stroke-width="1.5"/>
<path class="sk" stroke-width=".7" d="M1494.0 863.1L1498.5 895.1M1491.8 865.3L1495.7 893.4M1489.9 868.1L1493.1 891.1M1488.4 871.4L1490.7 888.1"/>
<circle class="sk" cx="1567.2" cy="865.9" r="23.9" stroke-width="1.3"/>
<circle class="sk" cx="1641.8" cy="865.1" r="16.3" stroke-width="1.5"/>
<path class="sk" stroke-width=".7" d="M1631.0 852.6L1634.7 879.6M1629.1 854.4L1632.4 878.1M1627.4 856.8L1630.2 876.2M1626.2 859.6L1628.2 873.7"/>
<circle class="sk" cx="1673.4" cy="714.6" r="16.3" stroke-width="1.5"/>
<path class="sk" stroke-width=".7" d="M1662.6 702.1L1666.4 729.1M1660.7 703.9L1664.1 727.6M1659.1 706.3L1661.8 725.7M1657.8 709.1L1659.8 723.2"/>
<circle class="sk" cx="1679.0" cy="751.6" r="18.1" stroke-width="1.1"/>
<circle class="sk" cx="1676.0" cy="781.2" r="7.5" stroke-width="1.1"/>
<circle class="sk" cx="1705.4" cy="790.5" r="20.6" stroke-width="1.5"/>
<path class="sk" stroke-width=".7" d="M1691.7 774.6L1696.5 808.7M1689.3 777.0L1693.5 806.9M1687.2 780.0L1690.7 804.5M1685.7 783.5L1688.2 801.3"/>
<polyline points="1395.1,734.0 1437.8,727.7 1449.1,713.9 1462.9,712.6 1475.5,723.9 1516.9,718.1 1519.4,735.2 1503.1,737.2 1501.8,743.3 1484.2,745.3 1483.5,739.0 1464.9,741.5 1461.6,726.4 1447.8,727.7 1449.1,749.0 1431.5,751.6 1430.2,745.3 1412.6,747.8 1413.1,754.1 1396.3,755.8 1395.1,734.0" fill="none" stroke="#fff" stroke-width="1"/>
<polygon class="sk" points="1418.9,769.9 1455.2,765.3 1457.9,786.7 1421.4,791.2"/>
<polyline points="1419.9,785.0 1458.6,779.9" fill="none" stroke="#e8eef2" stroke-width="4.8"/>
<polygon class="sk" points="1511.9,756.6 1548.5,752.0 1551.3,772.9 1514.6,777.4"/>
<polyline points="1513.4,774.4 1552.8,769.9" fill="none" stroke="#e8eef2" stroke-width="4.8"/>
<path class="sk" d="M1393.5 765.5A1.5 1.5 0 0 1 1396.6 765.2L1401.6 824.3A1.5 1.5 0 0 1 1398.6 824.5Z"/>
<path class="sk" d="M1477.7 754.2A1.5 1.5 0 0 1 1480.7 753.9L1487.0 815.5A1.5 1.5 0 0 1 1484.0 815.8Z"/>
<path class="sk" d="M1485.3 754.2A1.5 1.5 0 0 1 1488.3 753.9L1494.5 815.5A1.5 1.5 0 0 1 1491.5 815.8Z"/>
<path class="sk" d="M1571.7 742.9A1.3 1.3 0 0 1 1574.2 742.6L1581.0 800.4A1.3 1.3 0 0 1 1578.5 800.7Z"/>
<path class="sk" d="M1415.4 793.2A1.8 1.8 0 0 1 1418.9 792.8L1421.9 820.5A1.8 1.8 0 0 1 1418.4 820.8Z"/>
<path class="sk" d="M1432.2 793.2A1.8 1.8 0 0 1 1435.7 792.8L1438.8 820.5A1.8 1.8 0 0 1 1435.3 820.8Z"/>
<path class="sk" d="M1449.8 793.2A1.8 1.8 0 0 1 1453.3 792.8L1456.3 820.5A1.8 1.8 0 0 1 1452.8 820.8Z"/>
<path class="sk" d="M1466.2 793.2A1.8 1.8 0 0 1 1469.7 792.8L1472.7 820.5A1.8 1.8 0 0 1 1469.2 820.8Z"/>
<path class="sk" d="M1508.4 781.9A1.8 1.8 0 0 1 1511.9 781.5L1514.9 810.4A1.8 1.8 0 0 1 1511.4 810.8Z"/>
<path class="sk" d="M1526.5 781.9A1.8 1.8 0 0 1 1530.0 781.5L1533.0 810.4A1.8 1.8 0 0 1 1529.5 810.8Z"/>
<path class="sk" d="M1544.1 781.9A1.8 1.8 0 0 1 1547.6 781.5L1550.6 810.4A1.8 1.8 0 0 1 1547.1 810.8Z"/>
<path class="sk" d="M1560.4 781.9A1.8 1.8 0 0 1 1563.9 781.5L1566.9 810.4A1.8 1.8 0 0 1 1563.4 810.8Z"/>
<polygon class="sk" points="1702.1,705.1 1715.9,703.3 1722.9,746.5 1709.0,748.3"/>
<polyline points="1718.7,705.1 1723.2,745.8" fill="none" stroke="#e8eef2" stroke-width="4.8"/>
<path class="sk" d="M1704.2 698.8A1.3 1.3 0 0 1 1703.9 696.3L1741.6 691.8A1.3 1.3 0 0 1 1741.9 694.3Z"/>
<path class="sk" d="M1725.6 716.4A1.3 1.3 0 0 1 1725.3 713.9L1741.6 711.9A1.3 1.3 0 0 1 1741.9 714.4Z"/>
<path class="sk" d="M1729.4 737.7A1.3 1.3 0 0 1 1729.1 735.2L1746.6 733.0A1.3 1.3 0 0 1 1747.0 735.5Z"/>
<path class="sk" d="M1711.8 756.1A1.3 1.3 0 0 1 1711.5 753.6L1747.9 749.1A1.3 1.3 0 0 1 1748.2 751.5Z"/>
<polyline points="1643.8,697.0 1642.5,690.0" fill="none" stroke="#fff" stroke-width="1"/>
<polyline points="1643.8,697.0 1685.3,692.0" fill="none" stroke="#fff" stroke-width="1"/>
<text x="1685.3" y="857.3" fill="#fff" font-size="10.2" font-weight="bold" text-anchor="middle" textLength="28" lengthAdjust="spacingAndGlyphs" transform="rotate(-6 1685.3 857.3)">DC48V</text>
<text x="1739.3" y="849.8" fill="#fff" font-size="10.2" font-weight="bold" text-anchor="middle" textLength="21" lengthAdjust="spacingAndGlyphs" transform="rotate(-6 1739.3 849.8)">GND</text>
<text x="1447.8" y="837.0" fill="#fff" font-size="4.4" font-weight="normal" text-anchor="middle" transform="rotate(83 1447.8 837.0)">CD18</text>
<text x="1498.6" y="829.4" fill="#fff" font-size="4.4" font-weight="normal" text-anchor="middle" transform="rotate(83 1498.6 829.4)">CD30</text>
<text x="1522.7" y="816.9" fill="#fff" font-size="4.4" font-weight="normal" text-anchor="middle" transform="rotate(-7 1522.7 816.9)">CD24</text>
<text x="1480.5" y="888.5" fill="#fff" font-size="4.4" font-weight="normal" text-anchor="middle" transform="rotate(83 1480.5 888.5)">CD19</text>
<text x="1532.0" y="886.0" fill="#fff" font-size="4.4" font-weight="normal" text-anchor="middle" transform="rotate(83 1532.0 886.0)">CD21</text>
<text x="1595.6" y="862.9" fill="#fff" font-size="4.4" font-weight="normal" text-anchor="middle" transform="rotate(83 1595.6 862.9)">L2</text>
<text x="1662.6" y="870.9" fill="#fff" font-size="4.4" font-weight="normal" text-anchor="middle" transform="rotate(83 1662.6 870.9)">CD18</text>
<text x="1704.8" y="861.4" fill="#fff" font-size="4.4" font-weight="normal" text-anchor="middle" transform="rotate(83 1704.8 861.4)">P2</text>
<text x="1762.6" y="854.6" fill="#fff" font-size="4.4" font-weight="normal" text-anchor="middle" transform="rotate(83 1762.6 854.6)">P3</text>
<text x="1463.4" y="765.4" fill="#fff" font-size="4.4" font-weight="normal" text-anchor="middle" transform="rotate(83 1463.4 765.4)">MD6</text>
<text x="1581.5" y="764.1" fill="#fff" font-size="4.4" font-weight="normal" text-anchor="middle" transform="rotate(83 1581.5 764.1)">MD3</text>
<text x="1578.5" y="746.5" fill="#fff" font-size="4.4" font-weight="normal" text-anchor="middle" transform="rotate(83 1578.5 746.5)">R95</text>
<text x="1725.5" y="806.8" fill="#fff" font-size="4.4" font-weight="normal" text-anchor="middle" transform="rotate(83 1725.5 806.8)">C3</text>
<text x="1695.8" y="701.3" fill="#fff" font-size="4.4" font-weight="normal" text-anchor="middle" transform="rotate(83 1695.8 701.3)">D1</text>
<text x="1689.5" y="701.3" fill="#fff" font-size="4.4" font-weight="normal" text-anchor="middle" transform="rotate(83 1689.5 701.3)">C4</text>
<text x="1687.8" y="751.6" fill="#fff" font-size="4.4" font-weight="normal" text-anchor="middle" transform="rotate(83 1687.8 751.6)">ZR6B2</text>
<text x="1685.3" y="774.2" fill="#fff" font-size="4.4" font-weight="normal" text-anchor="middle" transform="rotate(83 1685.3 774.2)">C5</text>
<text x="1743.0" y="756.6" fill="#fff" font-size="4.4" font-weight="normal" text-anchor="middle" transform="rotate(83 1743.0 756.6)">TR4</text>
<text x="1400.1" y="766.6" fill="#fff" font-size="4.4" font-weight="normal" text-anchor="middle" transform="rotate(83 1400.1 766.6)">R90</text>
<text x="1463.1" y="505.1" fill="#fff" font-size="4.4" font-weight="normal" text-anchor="middle" transform="rotate(83 1463.1 505.1)">T4</text>
<text x="1493.3" y="546.5" fill="#fff" font-size="4.4" font-weight="normal" text-anchor="middle" transform="rotate(83 1493.3 546.5)">CY28</text>
<text x="1507.8" y="619.4" fill="#fff" font-size="4.4" font-weight="normal" text-anchor="middle" transform="rotate(83 1507.8 619.4)">T5</text>
<text x="1541.0" y="673.4" fill="#fff" font-size="4.4" font-weight="normal" text-anchor="middle" transform="rotate(83 1541.0 673.4)">CY5</text>
<text x="1632.7" y="674.7" fill="#fff" font-size="4.4" font-weight="normal" text-anchor="middle" transform="rotate(83 1632.7 674.7)">CY4</text>
<text x="1652.8" y="581.7" fill="#fff" font-size="4.4" font-weight="normal" text-anchor="middle" transform="rotate(83 1652.8 581.7)">C70</text>
<text x="1704.3" y="541.5" fill="#fff" font-size="4.4" font-weight="normal" text-anchor="middle" transform="rotate(83 1704.3 541.5)">D8</text>
<text x="1730.7" y="639.5" fill="#fff" font-size="4.4" font-weight="normal" text-anchor="middle" transform="rotate(83 1730.7 639.5)">T3</text>
<text x="1405.5" y="355.4" fill="#fff" font-size="4.4" font-weight="normal" text-anchor="middle" transform="rotate(83 1405.5 355.4)">CD3</text>
<text x="1450.2" y="394.3" fill="#fff" font-size="4.4" font-weight="normal" text-anchor="middle" transform="rotate(83 1450.2 394.3)">CY4</text>
<text x="1497.2" y="425.7" fill="#fff" font-size="4.4" font-weight="normal" text-anchor="middle" transform="rotate(-7 1497.2 425.7)">MD2</text>
<text x="1421.8" y="450.9" fill="#fff" font-size="4.4" font-weight="normal" text-anchor="middle" transform="rotate(83 1421.8 450.9)">MD4</text>
<text x="1433.1" y="427.0" fill="#fff" font-size="4.4" font-weight="normal" text-anchor="middle" transform="rotate(83 1433.1 427.0)">DD7</text>
<text x="1465.8" y="325.2" fill="#fff" font-size="4.4" font-weight="normal" text-anchor="middle" transform="rotate(-7 1465.8 325.2)">R52</text>
<text x="1527.3" y="376.7" fill="#fff" font-size="4.4" font-weight="normal" text-anchor="middle" transform="rotate(83 1527.3 376.7)">MD1</text>
<text x="1574.3" y="465.9" fill="#fff" font-size="4.4" font-weight="normal" text-anchor="middle" transform="rotate(83 1574.3 465.9)">C67</text>
<text x="1658.0" y="478.5" fill="#fff" font-size="4.4" font-weight="normal" text-anchor="middle" transform="rotate(83 1658.0 478.5)">CD14</text>
<text x="1675.6" y="429.5" fill="#fff" font-size="4.4" font-weight="normal" text-anchor="middle" transform="rotate(83 1675.6 429.5)">T2</text>
<text x="1523.1" y="415.7" fill="#fff" font-size="4.4" font-weight="normal" text-anchor="middle" transform="rotate(83 1523.1 415.7)">R53</text>
<text x="1503.8" y="156.3" fill="#fff" font-size="4.4" font-weight="normal" text-anchor="middle" transform="rotate(83 1503.8 156.3)">LF1</text>
<text x="1448.4" y="178.7" fill="#fff" font-size="4.4" font-weight="normal" text-anchor="middle" transform="rotate(83 1448.4 178.7)">CX1</text>
<text x="1378.9" y="144.5" fill="#fff" font-size="4.4" font-weight="normal" text-anchor="middle" transform="rotate(83 1378.9 144.5)">ZNR1</text>
<text x="1403.7" y="139.8" fill="#fff" font-size="4.4" font-weight="normal" text-anchor="middle" transform="rotate(83 1403.7 139.8)">ZNR2</text>
<text x="1408.8" y="188.1" fill="#fff" font-size="4.4" font-weight="normal" text-anchor="middle" transform="rotate(83 1408.8 188.1)">ZNR3</text>
<text x="1429.6" y="217.5" fill="#fff" font-size="4.4" font-weight="normal" text-anchor="middle" transform="rotate(83 1429.6 217.5)">K1</text>
<text x="1454.3" y="269.4" fill="#fff" font-size="4.4" font-weight="normal" text-anchor="middle" transform="rotate(-7 1454.3 269.4)">GDT1</text>
<text x="1396.6" y="277.6" fill="#fff" font-size="4.4" font-weight="normal" text-anchor="middle" transform="rotate(83 1396.6 277.6)">CD2</text>
<text x="1625.1" y="139.8" fill="#fff" font-size="4.4" font-weight="normal" text-anchor="middle" transform="rotate(83 1625.1 139.8)">BD1</text>
<text x="1620.4" y="162.2" fill="#fff" font-size="4.4" font-weight="normal" text-anchor="middle" transform="rotate(83 1620.4 162.2)">CD4</text>
<text x="1636.9" y="181.0" fill="#fff" font-size="4.4" font-weight="normal" text-anchor="middle" transform="rotate(83 1636.9 181.0)">T1</text>
<text x="1354.7" y="145.7" fill="#fff" font-size="4.4" font-weight="normal" text-anchor="middle" transform="rotate(83 1354.7 145.7)">JC1</text>
<text x="1513.2" y="198.7" fill="#fff" font-size="4.4" font-weight="normal" text-anchor="middle" transform="rotate(83 1513.2 198.7)">DD2</text>
<text x="1504.5" y="214.0" fill="#fff" font-size="4.4" font-weight="normal" text-anchor="middle" transform="rotate(83 1504.5 214.0)">DD3</text>
<text x="1513.9" y="270.5" fill="#fff" font-size="4.4" font-weight="normal" text-anchor="middle" transform="rotate(83 1513.9 270.5)">DD4</text>
<text x="1352.3" y="195.1" fill="#fff" font-size="4.4" font-weight="normal" text-anchor="middle" transform="rotate(83 1352.3 195.1)">FS1</text>
<text x="1538.4" y="138.6" fill="#fff" font-size="4.4" font-weight="normal" text-anchor="middle" transform="rotate(83 1538.4 138.6)">CX2</text>
<text x="1473.9" y="261.1" fill="#fff" font-size="4.4" font-weight="normal" text-anchor="middle" transform="rotate(-7 1473.9 261.1)">R51</text>
<circle cx="1337.7" cy="153.9" r="5.7" fill="#c9a42c"/><circle cx="1337.7" cy="153.9" r="2.4" fill="#f1e8cc"/>
<circle cx="1340.5" cy="179.1" r="5.7" fill="#c9a42c"/><circle cx="1340.5" cy="179.1" r="2.4" fill="#f1e8cc"/>
<circle cx="1371.9" cy="153.9" r="4.5" fill="#c9a42c"/><circle cx="1371.9" cy="153.9" r="1.9" fill="#f1e8cc"/>
<circle cx="1367.1" cy="178.0" r="4.5" fill="#c9a42c"/><circle cx="1367.1" cy="178.0" r="1.9" fill="#f1e8cc"/>
<circle cx="1396.6" cy="149.2" r="4.5" fill="#c9a42c"/><circle cx="1396.6" cy="149.2" r="1.9" fill="#f1e8cc"/>
<circle cx="1391.9" cy="173.5" r="4.5" fill="#c9a42c"/><circle cx="1391.9" cy="173.5" r="1.9" fill="#f1e8cc"/>
<circle cx="1424.9" cy="150.9" r="4.5" fill="#c9a42c"/><circle cx="1424.9" cy="150.9" r="1.9" fill="#f1e8cc"/>
<circle cx="1431.5" cy="199.9" r="4.5" fill="#c9a42c"/><circle cx="1431.5" cy="199.9" r="1.9" fill="#f1e8cc"/>
<circle cx="1370.7" cy="203.4" r="4.5" fill="#c9a42c"/><circle cx="1370.7" cy="203.4" r="1.9" fill="#f1e8cc"/>
<circle cx="1395.9" cy="206.5" r="4.5" fill="#c9a42c"/><circle cx="1395.9" cy="206.5" r="1.9" fill="#f1e8cc"/>
<circle cx="1342.4" cy="198.7" r="2.6" fill="#c9a42c"/><circle cx="1342.4" cy="198.7" r="1.1" fill="#f1e8cc"/>
<circle cx="1344.3" cy="215.9" r="2.6" fill="#c9a42c"/><circle cx="1344.3" cy="215.9" r="1.1" fill="#f1e8cc"/>
<circle cx="1360.8" cy="124.5" r="3.3" fill="#c9a42c"/><circle cx="1360.8" cy="124.5" r="1.4" fill="#f1e8cc"/>
<circle cx="1393.8" cy="117.9" r="3.3" fill="#c9a42c"/><circle cx="1393.8" cy="117.9" r="1.4" fill="#f1e8cc"/>
<circle cx="1419.0" cy="132.2" r="3.3" fill="#c9a42c"/><circle cx="1419.0" cy="132.2" r="1.4" fill="#f1e8cc"/>
<circle cx="1450.3" cy="114.6" r="4.5" fill="#c9a42c"/><circle cx="1450.3" cy="114.6" r="1.9" fill="#f1e8cc"/>
<circle cx="1455.5" cy="156.3" r="4.5" fill="#c9a42c"/><circle cx="1455.5" cy="156.3" r="1.9" fill="#f1e8cc"/>
<circle cx="1489.6" cy="149.9" r="4.5" fill="#c9a42c"/><circle cx="1489.6" cy="149.9" r="1.9" fill="#f1e8cc"/>
<circle cx="1519.6" cy="144.5" r="4.5" fill="#c9a42c"/><circle cx="1519.6" cy="144.5" r="1.9" fill="#f1e8cc"/>
<circle cx="1559.1" cy="131.1" r="4.5" fill="#c9a42c"/><circle cx="1559.1" cy="131.1" r="1.9" fill="#f1e8cc"/>
<circle cx="1605.1" cy="122.1" r="4.5" fill="#c9a42c"/><circle cx="1605.1" cy="122.1" r="1.9" fill="#f1e8cc"/>
<circle cx="1553.3" cy="157.5" r="4.5" fill="#c9a42c"/><circle cx="1553.3" cy="157.5" r="1.9" fill="#f1e8cc"/>
<circle cx="1571.6" cy="154.4" r="4.5" fill="#c9a42c"/><circle cx="1571.6" cy="154.4" r="1.9" fill="#f1e8cc"/>
<circle cx="1590.2" cy="150.9" r="4.5" fill="#c9a42c"/><circle cx="1590.2" cy="150.9" r="1.9" fill="#f1e8cc"/>
<circle cx="1608.6" cy="147.6" r="4.5" fill="#c9a42c"/><circle cx="1608.6" cy="147.6" r="1.9" fill="#f1e8cc"/>
<circle cx="1556.8" cy="182.2" r="4.5" fill="#c9a42c"/><circle cx="1556.8" cy="182.2" r="1.9" fill="#f1e8cc"/>
<circle cx="1610.5" cy="171.6" r="4.5" fill="#c9a42c"/><circle cx="1610.5" cy="171.6" r="1.9" fill="#f1e8cc"/>
<circle cx="1367.8" cy="231.7" r="4.5" fill="#c9a42c"/><circle cx="1367.8" cy="231.7" r="1.9" fill="#f1e8cc"/>
<circle cx="1419.7" cy="222.2" r="4.5" fill="#c9a42c"/><circle cx="1419.7" cy="222.2" r="1.9" fill="#f1e8cc"/>
<circle cx="1414.3" cy="249.3" r="4.5" fill="#c9a42c"/><circle cx="1414.3" cy="249.3" r="1.9" fill="#f1e8cc"/>
<circle cx="1370.7" cy="256.9" r="4.5" fill="#c9a42c"/><circle cx="1370.7" cy="256.9" r="1.9" fill="#f1e8cc"/>
<circle cx="1450.8" cy="227.7" r="4.5" fill="#c9a42c"/><circle cx="1450.8" cy="227.7" r="1.9" fill="#f1e8cc"/>
<circle cx="1445.6" cy="252.9" r="4.5" fill="#c9a42c"/><circle cx="1445.6" cy="252.9" r="1.9" fill="#f1e8cc"/>
<circle cx="1397.8" cy="226.2" r="2.1" fill="#cdb04a"/><circle cx="1397.8" cy="226.2" r="1.0" fill="#f3ecd6"/>
<circle cx="1430.3" cy="287.7" r="2.1" fill="#cdb04a"/><circle cx="1430.3" cy="287.7" r="1.0" fill="#f3ecd6"/>
<circle cx="1477.9" cy="229.3" r="6.1" fill="#c9a42c"/><circle cx="1477.9" cy="229.3" r="2.6" fill="#f1e8cc"/>
<circle cx="1494.4" cy="217.1" r="4.0" fill="#c9a42c"/><circle cx="1494.4" cy="217.1" r="1.7" fill="#f1e8cc"/>
<rect x="1492.7" y="230.5" width="8.0" height="8.0" fill="#c9a42c" transform="rotate(-7 1496.7 234.5)"/><circle cx="1496.7" cy="234.5" r="2.0" fill="#f3ecd6"/>
<circle cx="1486.1" cy="288.9" r="6.1" fill="#c9a42c"/><circle cx="1486.1" cy="288.9" r="2.6" fill="#f1e8cc"/>
<circle cx="1503.1" cy="277.1" r="4.0" fill="#c9a42c"/><circle cx="1503.1" cy="277.1" r="1.7" fill="#f1e8cc"/>
<rect x="1501.4" y="290.6" width="8.0" height="8.0" fill="#c9a42c" transform="rotate(-7 1505.4 294.6)"/><circle cx="1505.4" cy="294.6" r="2.0" fill="#f3ecd6"/>
<circle cx="1525.5" cy="215.6" r="4.2" fill="#c9a42c"/><circle cx="1525.5" cy="215.6" r="1.8" fill="#f1e8cc"/>
<circle cx="1530.4" cy="249.8" r="4.2" fill="#c9a42c"/><circle cx="1530.4" cy="249.8" r="1.8" fill="#f1e8cc"/>
<circle cx="1632.7" cy="196.8" r="4.2" fill="#c9a42c"/><circle cx="1632.7" cy="196.8" r="1.8" fill="#f1e8cc"/>
<circle cx="1635.7" cy="213.5" r="4.2" fill="#c9a42c"/><circle cx="1635.7" cy="213.5" r="1.8" fill="#f1e8cc"/>
<circle cx="1638.5" cy="230.5" r="4.2" fill="#c9a42c"/><circle cx="1638.5" cy="230.5" r="1.8" fill="#f1e8cc"/>
<circle cx="1642.3" cy="255.9" r="4.2" fill="#c9a42c"/><circle cx="1642.3" cy="255.9" r="1.8" fill="#f1e8cc"/>
<circle cx="1645.1" cy="273.4" r="4.2" fill="#c9a42c"/><circle cx="1645.1" cy="273.4" r="1.8" fill="#f1e8cc"/>
<circle cx="1648.0" cy="290.6" r="4.2" fill="#c9a42c"/><circle cx="1648.0" cy="290.6" r="1.8" fill="#f1e8cc"/>
<circle cx="1476.7" cy="115.0" r="1.9" fill="#cdb04a"/><circle cx="1476.7" cy="115.0" r="0.8" fill="#f3ecd6"/>
<circle cx="1481.4" cy="145.7" r="1.9" fill="#cdb04a"/><circle cx="1481.4" cy="145.7" r="0.8" fill="#f3ecd6"/>
<circle cx="1563.9" cy="122.1" r="1.9" fill="#cdb04a"/><circle cx="1563.9" cy="122.1" r="0.8" fill="#f3ecd6"/>
<circle cx="1598.0" cy="115.5" r="1.9" fill="#cdb04a"/><circle cx="1598.0" cy="115.5" r="0.8" fill="#f3ecd6"/>
<circle cx="1356.5" cy="311.4" r="4.3" fill="#c9a42c"/><circle cx="1356.5" cy="311.4" r="1.8" fill="#f1e8cc"/>
<circle cx="1382.4" cy="306.4" r="4.3" fill="#c9a42c"/><circle cx="1382.4" cy="306.4" r="1.8" fill="#f1e8cc"/>
<circle cx="1365.3" cy="387.5" r="4.3" fill="#c9a42c"/><circle cx="1365.3" cy="387.5" r="1.8" fill="#f1e8cc"/>
<circle cx="1391.7" cy="383.0" r="4.3" fill="#c9a42c"/><circle cx="1391.7" cy="383.0" r="1.8" fill="#f1e8cc"/>
<circle cx="1426.8" cy="390.6" r="3.0" fill="#c9a42c"/><circle cx="1426.8" cy="390.6" r="1.3" fill="#f1e8cc"/>
<circle cx="1436.1" cy="388.8" r="3.0" fill="#c9a42c"/><circle cx="1436.1" cy="388.8" r="1.3" fill="#f1e8cc"/>
<circle cx="1430.1" cy="287.5" r="2.0" fill="#cdb04a"/><circle cx="1430.1" cy="287.5" r="0.9" fill="#f3ecd6"/>
<circle cx="1430.1" cy="299.6" r="2.0" fill="#cdb04a"/><circle cx="1430.1" cy="299.6" r="0.9" fill="#f3ecd6"/>
<circle cx="1445.7" cy="343.3" r="2.0" fill="#cdb04a"/><circle cx="1445.7" cy="343.3" r="0.9" fill="#f3ecd6"/>
<circle cx="1446.4" cy="384.3" r="2.0" fill="#cdb04a"/><circle cx="1446.4" cy="384.3" r="0.9" fill="#f3ecd6"/>
<circle cx="1395.4" cy="416.2" r="2.0" fill="#cdb04a"/><circle cx="1395.4" cy="416.2" r="0.9" fill="#f3ecd6"/>
<circle cx="1555.0" cy="313.9" r="2.0" fill="#cdb04a"/><circle cx="1555.0" cy="313.9" r="0.9" fill="#f3ecd6"/>
<circle cx="1556.2" cy="319.4" r="2.0" fill="#cdb04a"/><circle cx="1556.2" cy="319.4" r="0.9" fill="#f3ecd6"/>
<circle cx="1557.0" cy="325.2" r="2.0" fill="#cdb04a"/><circle cx="1557.0" cy="325.2" r="0.9" fill="#f3ecd6"/>
<circle cx="1485.9" cy="289.5" r="6.0" fill="#c9a42c"/><circle cx="1485.9" cy="289.5" r="2.6" fill="#f1e8cc"/>
<circle cx="1488.9" cy="334.8" r="6.0" fill="#c9a42c"/><circle cx="1488.9" cy="334.8" r="2.6" fill="#f1e8cc"/>
<circle cx="1497.2" cy="398.1" r="6.5" fill="#c9a42c"/><circle cx="1497.2" cy="398.1" r="2.8" fill="#f1e8cc"/>
<circle cx="1520.6" cy="455.4" r="7.0" fill="#c9a42c"/><circle cx="1520.6" cy="455.4" r="3.0" fill="#f1e8cc"/>
<circle cx="1432.4" cy="468.9" r="6.5" fill="#c9a42c"/><circle cx="1432.4" cy="468.9" r="2.8" fill="#f1e8cc"/>
<rect x="1501.7" y="290.8" width="7.5" height="7.5" fill="#c9a42c" transform="rotate(-7 1505.5 294.6)"/><circle cx="1505.5" cy="294.6" r="1.9" fill="#f3ecd6"/>
<circle cx="1509.7" cy="354.6" r="4.0" fill="#c9a42c"/><circle cx="1509.7" cy="354.6" r="1.7" fill="#f1e8cc"/>
<circle cx="1512.3" cy="373.0" r="4.0" fill="#c9a42c"/><circle cx="1512.3" cy="373.0" r="1.7" fill="#f1e8cc"/>
<circle cx="1524.8" cy="360.9" r="4.0" fill="#c9a42c"/><circle cx="1524.8" cy="360.9" r="1.7" fill="#f1e8cc"/>
<circle cx="1556.7" cy="432.5" r="4.0" fill="#c9a42c"/><circle cx="1556.7" cy="432.5" r="1.7" fill="#f1e8cc"/>
<circle cx="1647.9" cy="290.6" r="4.3" fill="#c9a42c"/><circle cx="1647.9" cy="290.6" r="1.8" fill="#f1e8cc"/>
<circle cx="1652.5" cy="317.7" r="4.3" fill="#c9a42c"/><circle cx="1652.5" cy="317.7" r="1.8" fill="#f1e8cc"/>
<circle cx="1655.5" cy="334.8" r="4.3" fill="#c9a42c"/><circle cx="1655.5" cy="334.8" r="1.8" fill="#f1e8cc"/>
<circle cx="1658.0" cy="352.9" r="4.3" fill="#c9a42c"/><circle cx="1658.0" cy="352.9" r="1.8" fill="#f1e8cc"/>
<circle cx="1662.3" cy="379.7" r="4.3" fill="#c9a42c"/><circle cx="1662.3" cy="379.7" r="1.8" fill="#f1e8cc"/>
<circle cx="1665.5" cy="397.3" r="4.3" fill="#c9a42c"/><circle cx="1665.5" cy="397.3" r="1.8" fill="#f1e8cc"/>
<circle cx="1668.5" cy="415.7" r="4.3" fill="#c9a42c"/><circle cx="1668.5" cy="415.7" r="1.8" fill="#f1e8cc"/>
<circle cx="1475.8" cy="444.6" r="4.0" fill="#c9a42c"/><circle cx="1475.8" cy="444.6" r="1.7" fill="#f1e8cc"/>
<circle cx="1494.2" cy="441.6" r="4.0" fill="#c9a42c"/><circle cx="1494.2" cy="441.6" r="1.7" fill="#f1e8cc"/>
<circle cx="1483.4" cy="430.0" r="4.0" fill="#c9a42c"/><circle cx="1483.4" cy="430.0" r="1.7" fill="#f1e8cc"/>
<circle cx="1388.4" cy="458.4" r="4.0" fill="#c9a42c"/><circle cx="1388.4" cy="458.4" r="1.7" fill="#f1e8cc"/>
<circle cx="1406.7" cy="455.1" r="4.0" fill="#c9a42c"/><circle cx="1406.7" cy="455.1" r="1.7" fill="#f1e8cc"/>
<circle cx="1396.2" cy="443.3" r="4.0" fill="#c9a42c"/><circle cx="1396.2" cy="443.3" r="1.7" fill="#f1e8cc"/>
<circle cx="1558.2" cy="466.4" r="2.8" fill="#c9a42c"/><circle cx="1558.2" cy="466.4" r="1.2" fill="#f1e8cc"/>
<circle cx="1559.5" cy="475.5" r="2.8" fill="#c9a42c"/><circle cx="1559.5" cy="475.5" r="1.2" fill="#f1e8cc"/>
<circle cx="1627.3" cy="494.3" r="3.5" fill="#c9a42c"/><circle cx="1627.3" cy="494.3" r="1.5" fill="#f1e8cc"/>
<circle cx="1646.7" cy="491.1" r="3.5" fill="#c9a42c"/><circle cx="1646.7" cy="491.1" r="1.5" fill="#f1e8cc"/>
<circle cx="1690.7" cy="517.4" r="3.5" fill="#c9a42c"/><circle cx="1690.7" cy="517.4" r="1.5" fill="#f1e8cc"/>
<circle cx="1437.6" cy="508.1" r="4.0" fill="#c9a42c"/><circle cx="1437.6" cy="508.1" r="1.7" fill="#f1e8cc"/>
<circle cx="1451.2" cy="506.1" r="4.0" fill="#c9a42c"/><circle cx="1451.2" cy="506.1" r="1.7" fill="#f1e8cc"/>
<circle cx="1437.5" cy="508.3" r="4.3" fill="#c9a42c"/><circle cx="1437.5" cy="508.3" r="1.8" fill="#f1e8cc"/>
<circle cx="1451.3" cy="506.8" r="4.3" fill="#c9a42c"/><circle cx="1451.3" cy="506.8" r="1.8" fill="#f1e8cc"/>
<circle cx="1449.3" cy="601.8" r="4.3" fill="#c9a42c"/><circle cx="1449.3" cy="601.8" r="1.8" fill="#f1e8cc"/>
<circle cx="1463.1" cy="599.8" r="4.3" fill="#c9a42c"/><circle cx="1463.1" cy="599.8" r="1.8" fill="#f1e8cc"/>
<circle cx="1392.8" cy="632.7" r="4.3" fill="#c9a42c"/><circle cx="1392.8" cy="632.7" r="1.8" fill="#f1e8cc"/>
<circle cx="1410.9" cy="630.2" r="4.3" fill="#c9a42c"/><circle cx="1410.9" cy="630.2" r="1.8" fill="#f1e8cc"/>
<circle cx="1456.3" cy="623.9" r="4.3" fill="#c9a42c"/><circle cx="1456.3" cy="623.9" r="1.8" fill="#f1e8cc"/>
<circle cx="1474.9" cy="621.4" r="4.3" fill="#c9a42c"/><circle cx="1474.9" cy="621.4" r="1.8" fill="#f1e8cc"/>
<circle cx="1424.2" cy="518.1" r="1.8" fill="#cdb04a"/><circle cx="1424.2" cy="518.1" r="0.8" fill="#f3ecd6"/>
<circle cx="1429.9" cy="544.0" r="1.8" fill="#cdb04a"/><circle cx="1429.9" cy="544.0" r="0.8" fill="#f3ecd6"/>
<circle cx="1491.0" cy="560.9" r="1.8" fill="#cdb04a"/><circle cx="1491.0" cy="560.9" r="0.8" fill="#f3ecd6"/>
<circle cx="1477.7" cy="543.5" r="4.3" fill="#c9a42c"/><circle cx="1477.7" cy="543.5" r="1.8" fill="#f1e8cc"/>
<circle cx="1482.7" cy="579.7" r="4.3" fill="#c9a42c"/><circle cx="1482.7" cy="579.7" r="1.8" fill="#f1e8cc"/>
<circle cx="1521.7" cy="641.5" r="4.3" fill="#c9a42c"/><circle cx="1521.7" cy="641.5" r="1.8" fill="#f1e8cc"/>
<circle cx="1526.7" cy="679.7" r="4.3" fill="#c9a42c"/><circle cx="1526.7" cy="679.7" r="1.8" fill="#f1e8cc"/>
<circle cx="1617.6" cy="632.0" r="4.3" fill="#c9a42c"/><circle cx="1617.6" cy="632.0" r="1.8" fill="#f1e8cc"/>
<circle cx="1623.4" cy="670.2" r="4.3" fill="#c9a42c"/><circle cx="1623.4" cy="670.2" r="1.8" fill="#f1e8cc"/>
<circle cx="1513.4" cy="529.7" r="2.0" fill="#cdb04a"/><circle cx="1513.4" cy="529.7" r="0.9" fill="#f3ecd6"/>
<circle cx="1517.1" cy="557.3" r="2.0" fill="#cdb04a"/><circle cx="1517.1" cy="557.3" r="0.9" fill="#f3ecd6"/>
<circle cx="1556.6" cy="557.8" r="2.0" fill="#cdb04a"/><circle cx="1556.6" cy="557.8" r="0.9" fill="#f3ecd6"/>
<circle cx="1583.0" cy="549.8" r="2.0" fill="#cdb04a"/><circle cx="1583.0" cy="549.8" r="0.9" fill="#f3ecd6"/>
<circle cx="1583.0" cy="556.3" r="2.0" fill="#cdb04a"/><circle cx="1583.0" cy="556.3" r="0.9" fill="#f3ecd6"/>
<circle cx="1565.4" cy="577.7" r="2.0" fill="#cdb04a"/><circle cx="1565.4" cy="577.7" r="0.9" fill="#f3ecd6"/>
<circle cx="1567.6" cy="591.8" r="2.0" fill="#cdb04a"/><circle cx="1567.6" cy="591.8" r="0.9" fill="#f3ecd6"/>
<circle cx="1591.3" cy="598.8" r="2.0" fill="#cdb04a"/><circle cx="1591.3" cy="598.8" r="0.9" fill="#f3ecd6"/>
<circle cx="1605.8" cy="569.9" r="2.0" fill="#cdb04a"/><circle cx="1605.8" cy="569.9" r="0.9" fill="#f3ecd6"/>
<circle cx="1536.0" cy="626.4" r="2.0" fill="#cdb04a"/><circle cx="1536.0" cy="626.4" r="0.9" fill="#f3ecd6"/>
<circle cx="1535.2" cy="640.3" r="2.0" fill="#cdb04a"/><circle cx="1535.2" cy="640.3" r="0.9" fill="#f3ecd6"/>
<circle cx="1551.1" cy="700.1" r="2.0" fill="#cdb04a"/><circle cx="1551.1" cy="700.1" r="0.9" fill="#f3ecd6"/>
<circle cx="1615.1" cy="699.0" r="2.0" fill="#cdb04a"/><circle cx="1615.1" cy="699.0" r="0.9" fill="#f3ecd6"/>
<circle cx="1671.2" cy="521.4" r="3.5" fill="#c9a42c"/><circle cx="1671.2" cy="521.4" r="1.5" fill="#f1e8cc"/>
<circle cx="1690.5" cy="518.1" r="3.5" fill="#c9a42c"/><circle cx="1690.5" cy="518.1" r="1.5" fill="#f1e8cc"/>
<circle cx="1627.7" cy="494.3" r="3.5" fill="#c9a42c"/><circle cx="1627.7" cy="494.3" r="1.5" fill="#f1e8cc"/>
<circle cx="1646.5" cy="492.0" r="3.5" fill="#c9a42c"/><circle cx="1646.5" cy="492.0" r="1.5" fill="#f1e8cc"/>
<circle cx="1630.7" cy="577.2" r="2.8" fill="#c9a42c"/><circle cx="1630.7" cy="577.2" r="1.2" fill="#f1e8cc"/>
<circle cx="1640.3" cy="576.2" r="2.8" fill="#c9a42c"/><circle cx="1640.3" cy="576.2" r="1.2" fill="#f1e8cc"/>
<circle cx="1635.2" cy="613.1" r="4.0" fill="#c9a42c"/><circle cx="1635.2" cy="613.1" r="1.7" fill="#f1e8cc"/>
<circle cx="1649.8" cy="611.4" r="4.0" fill="#c9a42c"/><circle cx="1649.8" cy="611.4" r="1.7" fill="#f1e8cc"/>
<circle cx="1664.1" cy="608.8" r="4.0" fill="#c9a42c"/><circle cx="1664.1" cy="608.8" r="1.7" fill="#f1e8cc"/>
<circle cx="1683.7" cy="606.3" r="4.0" fill="#c9a42c"/><circle cx="1683.7" cy="606.3" r="1.7" fill="#f1e8cc"/>
<circle cx="1713.1" cy="602.3" r="4.0" fill="#c9a42c"/><circle cx="1713.1" cy="602.3" r="1.7" fill="#f1e8cc"/>
<circle cx="1657.3" cy="690.3" r="3.0" fill="#c9a42c"/><circle cx="1657.3" cy="690.3" r="1.3" fill="#f1e8cc"/>
<circle cx="1666.6" cy="689.2" r="3.0" fill="#c9a42c"/><circle cx="1666.6" cy="689.2" r="1.3" fill="#f1e8cc"/>
<circle cx="1706.3" cy="684.0" r="3.0" fill="#c9a42c"/><circle cx="1706.3" cy="684.0" r="1.3" fill="#f1e8cc"/>
<circle cx="1716.1" cy="683.0" r="3.0" fill="#c9a42c"/><circle cx="1716.1" cy="683.0" r="1.3" fill="#f1e8cc"/>
<circle cx="1676.7" cy="709.3" r="3.3" fill="#c9a42c"/><circle cx="1676.7" cy="709.3" r="1.4" fill="#f1e8cc"/>
<circle cx="1668.6" cy="720.4" r="3.3" fill="#c9a42c"/><circle cx="1668.6" cy="720.4" r="1.4" fill="#f1e8cc"/>
<circle cx="1708.8" cy="716.1" r="3.8" fill="#c9a42c"/><circle cx="1708.8" cy="716.1" r="1.6" fill="#f1e8cc"/>
<circle cx="1695.5" cy="726.7" r="3.8" fill="#c9a42c"/><circle cx="1695.5" cy="726.7" r="1.6" fill="#f1e8cc"/>
<circle cx="1729.4" cy="723.7" r="6.0" fill="#c9a42c"/><circle cx="1729.4" cy="723.7" r="2.6" fill="#f1e8cc"/>
<circle cx="1417.7" cy="852.8" r="3.8" fill="#c9a42c"/><circle cx="1417.7" cy="852.8" r="1.6" fill="#f1e8cc"/>
<circle cx="1437.3" cy="850.1" r="3.8" fill="#c9a42c"/><circle cx="1437.3" cy="850.1" r="1.6" fill="#f1e8cc"/>
<circle cx="1467.2" cy="847.5" r="3.8" fill="#c9a42c"/><circle cx="1467.2" cy="847.5" r="1.6" fill="#f1e8cc"/>
<circle cx="1486.3" cy="845.0" r="3.8" fill="#c9a42c"/><circle cx="1486.3" cy="845.0" r="1.6" fill="#f1e8cc"/>
<circle cx="1518.4" cy="841.5" r="3.8" fill="#c9a42c"/><circle cx="1518.4" cy="841.5" r="1.6" fill="#f1e8cc"/>
<circle cx="1538.0" cy="839.0" r="3.8" fill="#c9a42c"/><circle cx="1538.0" cy="839.0" r="1.6" fill="#f1e8cc"/>
<circle cx="1446.6" cy="883.5" r="3.8" fill="#c9a42c"/><circle cx="1446.6" cy="883.5" r="1.6" fill="#f1e8cc"/>
<circle cx="1465.7" cy="881.5" r="3.8" fill="#c9a42c"/><circle cx="1465.7" cy="881.5" r="1.6" fill="#f1e8cc"/>
<circle cx="1496.8" cy="877.9" r="3.8" fill="#c9a42c"/><circle cx="1496.8" cy="877.9" r="1.6" fill="#f1e8cc"/>
<circle cx="1516.2" cy="875.9" r="3.8" fill="#c9a42c"/><circle cx="1516.2" cy="875.9" r="1.6" fill="#f1e8cc"/>
<circle cx="1550.3" cy="867.6" r="3.8" fill="#c9a42c"/><circle cx="1550.3" cy="867.6" r="1.6" fill="#f1e8cc"/>
<circle cx="1583.5" cy="863.4" r="3.8" fill="#c9a42c"/><circle cx="1583.5" cy="863.4" r="1.6" fill="#f1e8cc"/>
<circle cx="1640.5" cy="857.8" r="3.3" fill="#c9a42c"/><circle cx="1640.5" cy="857.8" r="1.4" fill="#f1e8cc"/>
<circle cx="1642.5" cy="872.7" r="3.3" fill="#c9a42c"/><circle cx="1642.5" cy="872.7" r="1.4" fill="#f1e8cc"/>
<circle cx="1672.7" cy="868.9" r="6.0" fill="#c9a42c"/><circle cx="1672.7" cy="868.9" r="2.6" fill="#f1e8cc"/>
<circle cx="1691.0" cy="866.6" r="6.0" fill="#c9a42c"/><circle cx="1691.0" cy="866.6" r="2.6" fill="#f1e8cc"/>
<circle cx="1733.0" cy="862.1" r="6.0" fill="#c9a42c"/><circle cx="1733.0" cy="862.1" r="2.6" fill="#f1e8cc"/>
<circle cx="1751.1" cy="860.4" r="6.0" fill="#c9a42c"/><circle cx="1751.1" cy="860.4" r="2.6" fill="#f1e8cc"/>
<circle cx="1406.4" cy="745.8" r="4.0" fill="#c9a42c"/><circle cx="1406.4" cy="745.8" r="1.7" fill="#f1e8cc"/>
<circle cx="1423.9" cy="743.3" r="4.0" fill="#c9a42c"/><circle cx="1423.9" cy="743.3" r="1.7" fill="#f1e8cc"/>
<circle cx="1442.8" cy="741.0" r="4.0" fill="#c9a42c"/><circle cx="1442.8" cy="741.0" r="1.7" fill="#f1e8cc"/>
<circle cx="1470.9" cy="737.2" r="4.0" fill="#c9a42c"/><circle cx="1470.9" cy="737.2" r="1.7" fill="#f1e8cc"/>
<circle cx="1489.8" cy="735.2" r="4.0" fill="#c9a42c"/><circle cx="1489.8" cy="735.2" r="1.7" fill="#f1e8cc"/>
<circle cx="1508.1" cy="732.7" r="4.0" fill="#c9a42c"/><circle cx="1508.1" cy="732.7" r="1.7" fill="#f1e8cc"/>
<circle cx="1436.5" cy="759.1" r="4.0" fill="#c9a42c"/><circle cx="1436.5" cy="759.1" r="1.7" fill="#f1e8cc"/>
<circle cx="1529.5" cy="747.8" r="4.0" fill="#c9a42c"/><circle cx="1529.5" cy="747.8" r="1.7" fill="#f1e8cc"/>
<circle cx="1429.0" cy="774.9" r="3.8" fill="#c9a42c"/><circle cx="1429.0" cy="774.9" r="1.6" fill="#f1e8cc"/>
<circle cx="1447.8" cy="772.4" r="3.8" fill="#c9a42c"/><circle cx="1447.8" cy="772.4" r="1.6" fill="#f1e8cc"/>
<circle cx="1521.9" cy="764.1" r="3.8" fill="#c9a42c"/><circle cx="1521.9" cy="764.1" r="1.6" fill="#f1e8cc"/>
<circle cx="1541.3" cy="761.6" r="3.8" fill="#c9a42c"/><circle cx="1541.3" cy="761.6" r="1.6" fill="#f1e8cc"/>
<circle cx="1407.1" cy="797.3" r="6.3" fill="#c9a42c"/><circle cx="1407.1" cy="797.3" r="2.7" fill="#f1e8cc"/>
<circle cx="1568.9" cy="777.9" r="6.3" fill="#c9a42c"/><circle cx="1568.9" cy="777.9" r="2.7" fill="#f1e8cc"/>
<circle cx="1677.0" cy="709.3" r="3.3" fill="#c9a42c"/><circle cx="1677.0" cy="709.3" r="1.4" fill="#f1e8cc"/>
<circle cx="1668.4" cy="720.2" r="3.3" fill="#c9a42c"/><circle cx="1668.4" cy="720.2" r="1.4" fill="#f1e8cc"/>
<circle cx="1677.0" cy="742.8" r="3.3" fill="#c9a42c"/><circle cx="1677.0" cy="742.8" r="1.4" fill="#f1e8cc"/>
<circle cx="1680.2" cy="762.4" r="3.3" fill="#c9a42c"/><circle cx="1680.2" cy="762.4" r="1.4" fill="#f1e8cc"/>
<circle cx="1711.1" cy="781.7" r="3.3" fill="#c9a42c"/><circle cx="1711.1" cy="781.7" r="1.4" fill="#f1e8cc"/>
<circle cx="1699.1" cy="798.0" r="3.3" fill="#c9a42c"/><circle cx="1699.1" cy="798.0" r="1.4" fill="#f1e8cc"/>
<circle cx="1678.5" cy="777.9" r="2.3" fill="#c9a42c"/><circle cx="1678.5" cy="777.9" r="1.0" fill="#f1e8cc"/>
<circle cx="1673.2" cy="785.0" r="2.3" fill="#c9a42c"/><circle cx="1673.2" cy="785.0" r="1.0" fill="#f1e8cc"/>
<circle cx="1695.8" cy="727.7" r="4.3" fill="#c9a42c"/><circle cx="1695.8" cy="727.7" r="1.8" fill="#f1e8cc"/>
<circle cx="1709.1" cy="715.9" r="4.0" fill="#c9a42c"/><circle cx="1709.1" cy="715.9" r="1.7" fill="#f1e8cc"/>
<circle cx="1712.4" cy="736.5" r="4.0" fill="#c9a42c"/><circle cx="1712.4" cy="736.5" r="1.7" fill="#f1e8cc"/>
<circle cx="1730.5" cy="723.4" r="6.3" fill="#c9a42c"/><circle cx="1730.5" cy="723.4" r="2.7" fill="#f1e8cc"/>
<polyline points="1675.7,861.6 1678.0,876.9 1697.3,874.4 1694.8,859.1" fill="none" stroke="#f6f6f6" stroke-width="3.6"/><polyline points="1733.0,855.8 1735.3,870.4 1754.3,867.9 1752.1,852.8" fill="none" stroke="#f6f6f6" stroke-width="3.6"/>
<circle cx="1551.6" cy="700.1" r="2.0" fill="#cdb04a"/><circle cx="1551.6" cy="700.1" r="0.9" fill="#f3ecd6"/>
<circle cx="1614.9" cy="699.3" r="2.0" fill="#cdb04a"/><circle cx="1614.9" cy="699.3" r="0.9" fill="#f3ecd6"/>
<circle cx="1581.0" cy="734.0" r="2.0" fill="#cdb04a"/><circle cx="1581.0" cy="734.0" r="0.9" fill="#f3ecd6"/>
<circle cx="1585.5" cy="734.0" r="2.0" fill="#cdb04a"/><circle cx="1585.5" cy="734.0" r="0.9" fill="#f3ecd6"/>
<circle cx="1603.1" cy="740.3" r="2.0" fill="#cdb04a"/><circle cx="1603.1" cy="740.3" r="0.9" fill="#f3ecd6"/>
<circle cx="1636.3" cy="742.0" r="2.0" fill="#cdb04a"/><circle cx="1636.3" cy="742.0" r="0.9" fill="#f3ecd6"/>
<circle cx="1643.8" cy="741.5" r="2.0" fill="#cdb04a"/><circle cx="1643.8" cy="741.5" r="0.9" fill="#f3ecd6"/>
<circle cx="1625.7" cy="761.6" r="2.0" fill="#cdb04a"/><circle cx="1625.7" cy="761.6" r="0.9" fill="#f3ecd6"/>
<circle cx="1611.9" cy="774.9" r="2.0" fill="#cdb04a"/><circle cx="1611.9" cy="774.9" r="0.9" fill="#f3ecd6"/>
<circle cx="1657.6" cy="781.0" r="2.0" fill="#cdb04a"/><circle cx="1657.6" cy="781.0" r="0.9" fill="#f3ecd6"/>
<circle cx="1592.3" cy="795.5" r="2.0" fill="#cdb04a"/><circle cx="1592.3" cy="795.5" r="0.9" fill="#f3ecd6"/>
<circle cx="1603.6" cy="807.3" r="2.0" fill="#cdb04a"/><circle cx="1603.6" cy="807.3" r="0.9" fill="#f3ecd6"/>
<circle cx="1622.4" cy="808.8" r="2.0" fill="#cdb04a"/><circle cx="1622.4" cy="808.8" r="0.9" fill="#f3ecd6"/>
<circle cx="1638.3" cy="816.9" r="2.0" fill="#cdb04a"/><circle cx="1638.3" cy="816.9" r="0.9" fill="#f3ecd6"/>
<circle cx="1665.2" cy="821.2" r="2.0" fill="#cdb04a"/><circle cx="1665.2" cy="821.2" r="0.9" fill="#f3ecd6"/>
<circle cx="1686.5" cy="818.9" r="2.0" fill="#cdb04a"/><circle cx="1686.5" cy="818.9" r="0.9" fill="#f3ecd6"/>
<circle cx="1609.4" cy="834.0" r="2.0" fill="#cdb04a"/><circle cx="1609.4" cy="834.0" r="0.9" fill="#f3ecd6"/></g><rect x="1100" y="952" width="705" height="3" fill="#3a3a3a"/></svg>
<div id="title" class="a"></div>
<div class="a" style="left:1583px;top:-4px;width:150px;height:10px;background:#2f2f2f;border-radius:3px"></div>
<div class="t" style="left:734px;top:-11px;font-size:16px;letter-spacing:-0.05px;color:#dcdcdc">PFC.SchDoc - Altium Designer (22.0.2)</div>
<div class="a" style="left:0;top:0;width:6px;height:2px;background:#d8d8f0"></div><div class="a" style="left:23px;top:0;width:14px;height:3px;background:#b8b8e0"></div><div class="a" style="left:51px;top:0;width:12px;height:2px;background:#f0d080"></div><div class="a" style="left:79px;top:0;width:12px;height:2px;background:#f0c060"></div>
<div id="menubar" class="a"></div>
<div id="tabbar" class="a"></div>
<div class="t" style="left:4px;top:18px;font-size:15px;line-height:17px;letter-spacing:-0.724px;color:#ececec;">(<u>F</u>)</div>
<div class="t" style="left:37px;top:18px;font-size:15px;line-height:17px;letter-spacing:-0.365px;color:#ececec;">编辑 (<u>E</u>)</div>
<div class="t" style="left:105px;top:18px;font-size:15px;line-height:17px;letter-spacing:-0.031px;color:#ececec;">视图 (<u>V</u>)</div>
<div class="t" style="left:176px;top:18px;font-size:15px;line-height:17px;letter-spacing:-0.336px;color:#ececec;">工程 (<u>C</u>)</div>
<div class="t" style="left:245px;top:18px;font-size:15px;line-height:17px;letter-spacing:-0.115px;color:#ececec;">放置 (<u>P</u>)</div>
<div class="t" style="left:314.6px;top:18px;font-size:15px;line-height:17px;letter-spacing:-0.003px;color:#ececec;">设计 (<u>D</u>)</div>
<div class="t" style="left:385.6px;top:18px;font-size:15px;line-height:17px;letter-spacing:-0.057px;color:#ececec;">工具 (<u>T</u>)</div>
<div class="t" style="left:454.5px;top:18px;font-size:15px;line-height:17px;letter-spacing:-0.169px;color:#ececec;">报告 (<u>R</u>)</div>
<div class="t" style="left:524.7px;top:18px;font-size:15px;line-height:17px;letter-spacing:0.731px;color:#ececec;">Window (<u>W</u>)</div>
<div class="t" style="left:630px;top:18px;font-size:15px;line-height:17px;letter-spacing:0.164px;color:#ececec;">帮助 (<u>H</u>)</div>
<div class="a" style="left:1503px;top:16px;width:37px;height:21px;background:#686868;border-radius:3px"></div>
<svg class="a" style="left:1512px;top:20px" width="18" height="15" viewBox="0 0 18 15"><path d="M1 1.5 Q1 0.5 2 0.5 L16 0.5 Q17 0.5 17 1.5 L17 9.5 Q17 10.5 16 10.5 L6 10.5 L2 14 L2 10.5 Q1 10.5 1 9.5 Z" fill="#fff"/><path d="M9 2.5 V8.5 M6 5.5 H12" stroke="#555" stroke-width="1.6"/></svg>
<div class="a" style="left:1546px;top:16px;width:122px;height:21px;background:#6080a3;border-radius:3px"></div>
<svg class="a" style="left:1551px;top:19px" width="12" height="15" viewBox="0 0 12 15"><path d="M2 2 Q7 0 9 4 Q11 9 7 13 M2 5 Q5 3 6.5 6 Q8 9 5 12 M2 8 Q4 7 4 9" fill="none" stroke="#e8eef6" stroke-width="1.2"/></svg>
<div class="t" style="left:1568px;top:18px;font-size:15px;line-height:17px;letter-spacing:-0.003px;color:#eef2f8;">立即在线购买</div>
<div class="a" style="left:1675px;top:19px;width:1px;height:14px;background:#222"></div>
<div class="a" style="left:1703px;top:19px;width:1px;height:14px;background:#222"></div>
<div class="a" style="left:1731px;top:19px;width:1px;height:14px;background:#222"></div>
<svg class="a" style="left:1682px;top:19px" width="14" height="14" viewBox="-7 -7 14 14"><g fill="#fff"><rect x="-1.6" y="-7" width="3.2" height="14" transform="rotate(0)"/><rect x="-1.6" y="-7" width="3.2" height="14" transform="rotate(60)"/><rect x="-1.6" y="-7" width="3.2" height="14" transform="rotate(120)"/><circle r="5"/></g><circle r="2.1" fill="#3d3d3d"/></svg>
<svg class="a" style="left:1710px;top:19px" width="15" height="14" viewBox="0 0 15 14"><path d="M1 9 Q2 3 8 2.5 L12 2.5 Q14 2.5 13.5 5 L12 9 Q11 11 8 11 L2 11 Z" fill="#fff"/><path d="M1 13 L14 1" stroke="#3d3d3d" stroke-width="3"/><path d="M1.5 13 L13.5 1.5" stroke="#fff" stroke-width="1.3"/></svg>
<svg class="a" style="left:1740px;top:18px" width="15" height="15" viewBox="0 0 15 15"><circle cx="7.5" cy="7.5" r="7" fill="#fff"/><circle cx="7.5" cy="5.6" r="2.5" fill="#3d3d3d"/><path d="M2.8 11.6 Q7.5 7.2 12.2 11.6 Q7.5 15 2.8 11.6Z" fill="#3d3d3d"/></svg>
<div class="t" style="left:1762px;top:18px;font-size:16px;line-height:17px;color:#f0f0f0">Not Signed In</div>
<div id="lp" class="a"></div><div id="gap" class="a"></div><div id="lph" class="a"></div>
<div class="a" style="left:-40px;top:50px;width:64px;height:20px;overflow:hidden"><div class="t" style="right:0;top:1px;font-size:15.5px;line-height:17px;font-weight:bold;color:#fff;letter-spacing:-0.3px">Projects</div></div>
<svg class="a" style="left:238px;top:56px" width="8" height="6" viewBox="0 0 8 6"><path d="M0.5 0.5 L7.5 0.5 L4 5.5Z" fill="#fff"/></svg>
<svg class="a" style="left:258px;top:53px" width="9" height="11" viewBox="0 0 9 11"><path d="M2 0.7 H7 M2.6 0.7 V5 M6.4 0.7 V5 M1 5.4 H8 M4.5 5.4 V10" stroke="#fff" stroke-width="1.4" fill="none"/><rect x="4.5" y="1" width="2" height="4" fill="#fff"/></svg>
<svg class="a" style="left:278px;top:55px" width="9" height="8" viewBox="0 0 9 8"><path d="M1 0.5 L8 7.5 M8 0.5 L1 7.5" stroke="#fff" stroke-width="1.7"/></svg>
<svg class="a" style="left:10px;top:88px" width="120" height="22" viewBox="10 88 120 22"><path d="M18.5 91H23.5L26 93.5V103H18.5Z" fill="#9a9a9a"/><path d="M16 93H21L23.5 95.5V105H16Z" fill="#a6a6a6" stroke="#404040" stroke-width=".5"/><path d="M13.5 95H19L21.5 97.5V106.5H13.5Z" fill="#b6b6b6" stroke="#404040" stroke-width=".5"/><path d="M15 100.5H20M15 102.7H20" stroke="#555" stroke-width="1"/><path d="M44 91.3H49L50 93H57V102H44Z" fill="#8c8c8c"/><path d="M45 94H56V101H45Z" fill="#989898"/><circle cx="56.3" cy="99" r="3.3" fill="#a4a4a4" stroke="#404040" stroke-width=".6"/><path d="M54 101.7L50.3 105.3" stroke="#9c9c9c" stroke-width="1.5"/><path d="M76 91.3H81L82 93H89V102H76Z" fill="#8c8c8c"/><path d="M77 94H88V101H77Z" fill="#989898"/><g transform="translate(86.7 101.4)"><g fill="#a0a0a0" stroke="#404040" stroke-width=".4"><rect x="-1" y="-5" width="2" height="10" transform="rotate(0)"/><rect x="-1" y="-5" width="2" height="10" transform="rotate(45)"/><rect x="-1" y="-5" width="2" height="10" transform="rotate(90)"/><rect x="-1" y="-5" width="2" height="10" transform="rotate(135)"/></g><circle r="3.7" fill="#a0a0a0"/><circle r="1.6" fill="#606060"/><rect x="-1.4" y="-.5" width="2.8" height="1" fill="#c8c8c8"/></g><rect x="101.8" y="91" width="1" height="16" fill="#242424"/><g transform="translate(120 99)"><g fill="#aab4bc"><rect x="-1" y="-7" width="2" height="14" transform="rotate(0)"/><rect x="-1" y="-7" width="2" height="14" transform="rotate(30)"/><rect x="-1" y="-7" width="2" height="14" transform="rotate(60)"/><rect x="-1" y="-7" width="2" height="14" transform="rotate(90)"/><rect x="-1" y="-7" width="2" height="14" transform="rotate(120)"/><rect x="-1" y="-7" width="2" height="14" transform="rotate(150)"/></g><circle r="5.7" fill="#b6c0c8"/><circle r="1.9" fill="#404040"/></g></svg>
<div id="lpin" class="a"></div>
<div id="search" class="a"></div>
<div class="t" style="left:6.3px;top:128px;font-size:14px;line-height:16px;letter-spacing:-0.893px;color:#d8d8d8;">Search</div>
<div class="a" style="left:0;top:156px;width:277px;height:1px;background:#2c2c2c"></div>
<div class="t" style="left:0px;top:173px;font-size:14px;line-height:16px;letter-spacing:-0.071px;font-weight:bold;color:#f2f2f2;">Project Group 1.DsnWrk</div>
<div class="a" style="left:10px;top:193px;width:269px;height:21px;background:#515151;border:1px solid #5f7ea2"></div>
<svg class="a" style="left:-4px;top:198px" width="14" height="12" viewBox="0 0 14 12"><path d="M0.5 2.5 L1.5 0.5 L5.5 0.5 L6.5 2.5 L13.5 2.5 L13.5 11.5 L0.5 11.5 Z" fill="#b5dba8" stroke="#8fbf84"/><rect x="0.5" y="3.5" width="13" height="8" fill="#a9d49c"/></svg>
<div class="t" style="left:13.2px;top:195px;font-size:14px;line-height:16px;letter-spacing:-0.193px;font-weight:bold;color:#fff;">Free Documents</div>
<svg class="a" style="left:-2px;top:222px" width="6" height="6" viewBox="0 0 6 6"><path d="M5 0 L5 5 L0 5Z" fill="#ddd"/></svg>
<svg class="a" style="left:10px;top:219px" width="14" height="12" viewBox="0 0 14 12"><path d="M0.5 2.5 L1.5 0.5 L5.5 0.5 L6.5 2.5 L13.5 2.5 L13.5 11.5 L0.5 11.5 Z" fill="#b5dba8" stroke="#8fbf84"/><rect x="0.5" y="3.5" width="13" height="8" fill="#a9d49c"/></svg>
<div class="t" style="left:28.3px;top:217px;font-size:14px;line-height:16px;letter-spacing:-0.273px;color:#e4e4e4;">Source Documents</div>
<svg class="a" style="left:25px;top:241px" width="16" height="12" viewBox="0 0 16 12"><rect x="0" y="0" width="15.5" height="11.5" fill="#0b8a52"/><rect x="0" y="0" width="15.5" height="1" fill="#19a86a"/><rect x="1" y="2.3" width="1" height="1.2" fill="#fff"/><rect x="3" y="2.3" width="3" height="1.2" fill="#fff"/><rect x="1" y="4.5" width="1" height="1.2" fill="#fff"/><rect x="3" y="4.5" width="3" height="1.2" fill="#fff"/><rect x="1" y="6.7" width="1" height="1.2" fill="#fff"/><rect x="3" y="6.7" width="3" height="1.2" fill="#fcdce0"/><rect x="1" y="8.9" width="1" height="1.2" fill="#fff"/><rect x="3" y="8.9" width="3" height="1.2" fill="#fff"/><rect x="6.5" y="3.4" width="2.6" height=".8" fill="#30c080"/><rect x="6.5" y="5.6" width="2.6" height=".8" fill="#30c080"/><rect x="10" y="2" width="4.2" height="4" fill="#e6f4ec"/><rect x="10" y="7.8" width="1.6" height="1.8" fill="#fff"/><rect x="12.6" y="7.8" width="1.6" height="1.8" fill="#fff"/></svg>
<div class="a" style="left:43.3px;top:238px;width:190px;height:18px;overflow:hidden"><div class="t" style="left:0px;top:1px;font-size:14px;line-height:16px;letter-spacing:-0.719px;color:#e4e4e4;">PFC_LLC_SR_20260321.PcbDoc</div></div>
<svg class="a" style="left:239px;top:241px" width="10" height="12" viewBox="0 0 10 12"><path d="M1 1 L6 1 L9 4 L9 11 L1 11 Z" fill="none" stroke="#f0f0f0" stroke-width="1.4"/><path d="M5.5 1 L5.5 4.5 L9 4.5" fill="none" stroke="#f0f0f0" stroke-width="1.2"/></svg>
<div class="a" style="left:40px;top:259px;width:239px;height:22px;background:#5d80a6"></div>
<svg class="a" style="left:25px;top:264px" width="16" height="12" viewBox="0 0 16 12"><rect x="0.5" y="0.5" width="14" height="10" fill="#f3dc83" stroke="#d9b850"/><rect x="0.5" y="0.5" width="14" height="2" fill="#fff3b8"/><rect x="8" y="6" width="6" height="1" fill="#8a7a3a"/><rect x="8" y="8" width="6" height="1" fill="#8a7a3a"/></svg>
<div class="t" style="left:43.3px;top:261px;font-size:14px;line-height:16px;letter-spacing:-0.892px;color:#fff;">PFC.SchDoc</div>
<svg class="a" style="left:239px;top:263px" width="10" height="12" viewBox="0 0 10 12"><path d="M1 1 L6 1 L9 4 L9 11 L1 11 Z" fill="none" stroke="#f0f0f0" stroke-width="1.4"/><path d="M5.5 1 L5.5 4.5 L9 4.5" fill="none" stroke="#f0f0f0" stroke-width="1.2"/></svg>
<svg class="a" style="left:25px;top:286px" width="16" height="12" viewBox="0 0 16 12"><rect x="0.5" y="0.5" width="14" height="10" fill="#f3dc83" stroke="#d9b850"/><rect x="0.5" y="0.5" width="14" height="2" fill="#fff3b8"/><rect x="8" y="6" width="6" height="1" fill="#8a7a3a"/><rect x="8" y="8" width="6" height="1" fill="#8a7a3a"/></svg>
<div class="t" style="left:43.3px;top:283px;font-size:14px;line-height:16px;letter-spacing:-0.552px;color:#e4e4e4;">AUX_Power.SchDoc *</div>
<svg class="a" style="left:239px;top:285px" width="10" height="12" viewBox="0 0 10 12"><path d="M1 1 L6 1 L9 4 L9 11 L1 11 Z" fill="none" stroke="#e8606a" stroke-width="1.4"/><path d="M5.5 1 L5.5 4.5 L9 4.5" fill="none" stroke="#e8606a" stroke-width="1.2"/></svg>
<svg class="a" style="left:25px;top:308px" width="16" height="12" viewBox="0 0 16 12"><rect x="0.5" y="0.5" width="14" height="10" fill="#f3dc83" stroke="#d9b850"/><rect x="0.5" y="0.5" width="14" height="2" fill="#fff3b8"/><rect x="8" y="6" width="6" height="1" fill="#8a7a3a"/><rect x="8" y="8" width="6" height="1" fill="#8a7a3a"/></svg>
<div class="t" style="left:43.3px;top:305px;font-size:14px;line-height:16px;letter-spacing:-0.729px;color:#e4e4e4;">LLC.SchDoc</div>
<svg class="a" style="left:239px;top:307px" width="10" height="12" viewBox="0 0 10 12"><path d="M1 1 L6 1 L9 4 L9 11 L1 11 Z" fill="none" stroke="#f0f0f0" stroke-width="1.4"/><path d="M5.5 1 L5.5 4.5 L9 4.5" fill="none" stroke="#f0f0f0" stroke-width="1.2"/></svg>
<div class="a" style="left:40px;top:237px;width:239px;height:1px;background:#464646"></div>
<div class="a" style="left:40px;top:303px;width:239px;height:1px;background:#464646"></div>
<div class="a" style="left:40px;top:325px;width:239px;height:1px;background:#464646"></div>
<div class="a" style="left:301px;top:45px;width:100px;height:29px;background:#595959;border-radius:4px 4px 0 0"></div>
<svg class="a" style="left:305px;top:53px" width="16" height="12" viewBox="0 0 16 12"><rect x="0.5" y="0.5" width="14" height="10" fill="#f3dc83" stroke="#d9b850"/><rect x="0.5" y="0.5" width="14" height="2" fill="#fff3b8"/><rect x="8" y="6" width="6" height="1" fill="#8a7a3a"/><rect x="8" y="8" width="6" height="1" fill="#8a7a3a"/></svg>
<div class="t" style="left:325.4px;top:51px;font-size:14px;line-height:16px;letter-spacing:-0.932px;color:#e8e8e8;">PFC.SchDoc</div>
<svg class="a" style="left:407px;top:53px" width="16" height="12" viewBox="0 0 16 12"><rect x="0.5" y="0.5" width="14" height="10" fill="#f3dc83" stroke="#d9b850"/><rect x="0.5" y="0.5" width="14" height="2" fill="#fff3b8"/><rect x="8" y="6" width="6" height="1" fill="#8a7a3a"/><rect x="8" y="8" width="6" height="1" fill="#8a7a3a"/></svg>
<div class="t" style="left:427.4px;top:51px;font-size:14px;line-height:16px;letter-spacing:-0.596px;color:#e8e8e8;">AUX_Power.SchDoc *</div>
<svg class="a" style="left:565px;top:53px" width="16" height="12" viewBox="0 0 16 12"><rect x="0.5" y="0.5" width="14" height="10" fill="#f3dc83" stroke="#d9b850"/><rect x="0.5" y="0.5" width="14" height="2" fill="#fff3b8"/><rect x="8" y="6" width="6" height="1" fill="#8a7a3a"/><rect x="8" y="8" width="6" height="1" fill="#8a7a3a"/></svg>
<div class="t" style="left:585.8px;top:51px;font-size:14px;line-height:16px;letter-spacing:-0.829px;color:#e8e8e8;">LLC.SchDoc</div>
<svg class="a" style="left:1104px;top:53px" width="16" height="12" viewBox="0 0 16 12"><rect x="0" y="0" width="15.5" height="11.5" fill="#0b8a52"/><rect x="0" y="0" width="15.5" height="1" fill="#19a86a"/><rect x="1" y="2.3" width="1" height="1.2" fill="#fff"/><rect x="3" y="2.3" width="3" height="1.2" fill="#fff"/><rect x="1" y="4.5" width="1" height="1.2" fill="#fff"/><rect x="3" y="4.5" width="3" height="1.2" fill="#fff"/><rect x="1" y="6.7" width="1" height="1.2" fill="#fff"/><rect x="3" y="6.7" width="3" height="1.2" fill="#fcdce0"/><rect x="1" y="8.9" width="1" height="1.2" fill="#fff"/><rect x="3" y="8.9" width="3" height="1.2" fill="#fff"/><rect x="6.5" y="3.4" width="2.6" height=".8" fill="#30c080"/><rect x="6.5" y="5.6" width="2.6" height=".8" fill="#30c080"/><rect x="10" y="2" width="4.2" height="4" fill="#e6f4ec"/><rect x="10" y="7.8" width="1.6" height="1.8" fill="#fff"/><rect x="12.6" y="7.8" width="1.6" height="1.8" fill="#fff"/></svg>
<div class="t" style="left:1124.1px;top:51px;font-size:14px;line-height:16px;letter-spacing:-0.758px;color:#e8e8e8;">PFC_LLC_SR_20260321.PcbDoc</div>
<svg class="a" style="left:480px;top:76px" width="440" height="38" viewBox="480 76 440 38">
<rect x="483.7" y="79" width="427.6" height="31.6" rx="5" fill="#383838"/>
<path d="M498 89.5H511L506.3 95V101H502.7V95Z" fill="#8fc4ee"/><path d="M498 89.5H511L510 91H499Z" fill="#d5ecfb"/>
<path d="M536.6 88V102M529.6 95H543.6" stroke="#5b8fd8" stroke-width="1.05"/><path d="M536.6 87L538 89.5H535.2ZM536.6 103L538 100.5H535.2ZM528.6 95L531 93.6V96.4ZM544.6 95L542.2 93.6V96.4Z" fill="#5b8fd8"/>
<rect x="562" y="88" width="14" height="14" fill="none" stroke="#5b8fd8" stroke-width="1" stroke-dasharray="2.2 1.6"/>
<rect x="594.5" y="88" width="1.8" height="14" fill="#6aa0e0"/><rect x="598" y="89" width="7" height="3.6" fill="#e8737c"/><rect x="598" y="93.6" width="10" height="3.6" fill="#8cc0ee"/><path d="M599 100H607M599 100L601.5 98.3M599 100L601.5 101.7" stroke="#a8cff2" stroke-width="1" fill="none"/>
<rect x="617.3" y="87" width="1" height="16" fill="#1e1e1e"/>
<rect x="630" y="88.5" width="8" height="13" fill="#f2d277" stroke="#c89a2c" stroke-width=".8"/><path d="M627 90.5H630M627 93.5H630M627 96.5H630M627 99.5H630M638 90.5H641M638 93.5H641M638 96.5H641M638 99.5H641" stroke="#e0b040" stroke-width="1"/>
<path d="M658.5 92H663L668 96H674M658.5 95.5H663L668 99.5H674" stroke="#3a8de0" stroke-width="1.6" fill="none"/>
<path d="M697.7 87.5V96M690.5 96H705M693 99H702.5M695.5 102H700" stroke="#e05050" stroke-width="1.2" fill="none"/>
<rect x="722.5" y="87" width="2.6" height="15" fill="#bcdcff"/><path d="M726 96H731" stroke="#5b8fd8" stroke-width="1.2"/><path d="M733 98L734 93M735.8 98L736.8 93M738.6 98L739.6 93" stroke="#5b8fd8" stroke-width="1.2"/>
<rect x="756" y="89.5" width="12.5" height="10.5" fill="#3eb86a" stroke="#2a6ed0" stroke-width="1"/><path d="M754 92H756M754 97.5H756M768.5 92H770.5M768.5 97.5H770.5" stroke="#4a8de0" stroke-width="1.2"/><path d="M757.5 91.2L759.5 92.5L757.5 93.8ZM757.5 96.2L759.5 97.5L757.5 98.8ZM767 91.2L765 92.5L767 93.8ZM767 96.2L765 97.5L767 98.8Z" fill="#f0e060"/>
<path d="M786 91H797L800.5 94.7L797 98.5H786Z" fill="#f0c840"/><path d="M800.5 94.7H802.5" stroke="#f0c840" stroke-width="1"/><text x="787.3" y="97.3" font-size="5.6" font-weight="bold" fill="#3a3a3a" font-family="Liberation Sans,sans-serif">D1</text>
<circle cx="827" cy="94.8" r="5.7" fill="none" stroke="#e05050" stroke-width="1.1"/><path d="M817.5 94.8H821.3" stroke="#e05050" stroke-width="1.1"/><path d="M827 93.8V98.3" stroke="#e05050" stroke-width="1.3"/><circle cx="827" cy="91.6" r=".8" fill="#e05050"/>
<text x="858" y="101.6" font-size="19" font-weight="bold" text-anchor="middle" fill="#4a8de0" font-family="Liberation Serif,serif">A</text>
<path d="M882.8 100A7 7 0 1 1 896.4 100" fill="none" stroke="#3a7ad0" stroke-width="1.2"/>
<path d="M551.4 103.9V108.7H546.6Z" fill="#cfcfcf"/>
<path d="M583.4 103.9V108.7H578.6Z" fill="#cfcfcf"/>
<path d="M615.4 103.9V108.7H610.6Z" fill="#cfcfcf"/>
<path d="M680.4 103.9V108.7H675.6Z" fill="#cfcfcf"/>
<path d="M712.4 103.9V108.7H707.6Z" fill="#cfcfcf"/>
<path d="M744.4 103.9V108.7H739.6Z" fill="#cfcfcf"/>
<path d="M776.4 103.9V108.7H771.6Z" fill="#cfcfcf"/>
<path d="M808.4 103.9V108.7H803.6Z" fill="#cfcfcf"/>
<path d="M840.4 103.9V108.7H835.6Z" fill="#cfcfcf"/>
<path d="M872.4 103.9V108.7H867.6Z" fill="#cfcfcf"/>
<path d="M904.4 103.9V108.7H899.6Z" fill="#cfcfcf"/>
</svg>
<svg class="a" style="left:1235px;top:76px" width="470" height="38" viewBox="1235 76 470 38">
<rect x="1240.2" y="79" width="458.3" height="32" rx="5" fill="#383838"/>
<path d="M1254 89.5H1267L1262.3 95V101H1258.7V95Z" fill="#8fc4ee"/><path d="M1254 89.5H1267L1266 91H1255Z" fill="#d5ecfb"/>
<path d="M1289 90.5H1294A4.3 4.3 0 0 1 1294 99H1289" fill="none" stroke="#e8707a" stroke-width="2.6"/><rect x="1287.6" y="89.2" width="3" height="2.6" fill="#cfe4fa"/><rect x="1287.6" y="97.7" width="3" height="2.6" fill="#cfe4fa"/><circle cx="1285.8" cy="90.5" r=".9" fill="#cfe4fa"/><circle cx="1285.8" cy="94.7" r=".9" fill="#cfe4fa"/><circle cx="1285.8" cy="99" r=".9" fill="#cfe4fa"/>
<path d="M1324.3 88V102M1317.3 95H1331.3" stroke="#5b8fd8" stroke-width="1.05"/><path d="M1324.3 87L1325.7 89.5H1322.9ZM1324.3 103L1325.7 100.5H1322.9ZM1316.3 95L1318.7 93.6V96.4ZM1332.3 95L1329.9 93.6V96.4Z" fill="#5b8fd8"/>
<rect x="1350" y="88" width="14" height="14" fill="none" stroke="#5b8fd8" stroke-width="1" stroke-dasharray="2.2 1.6"/>
<rect x="1383.5" y="92" width="2.8" height="7" fill="#8a8a8a"/><rect x="1387.2" y="89.5" width="2.8" height="9.5" fill="#8a8a8a"/><rect x="1390.9" y="93" width="2.8" height="6" fill="#8a8a8a"/><rect x="1382.5" y="100" width="12.2" height="1.2" fill="#8a8a8a"/>
<rect x="1405.3" y="87" width="1" height="16" fill="#1e1e1e"/>
<rect x="1415.7" y="89.2" width="11" height="11" fill="#d0dde8"/><rect x="1414.2" y="87.7" width="14" height="14" fill="none" stroke="#8fc0ee" stroke-width="1.4" stroke-dasharray="1 1"/>
<path d="M1449 98V90.5H1455" fill="none" stroke="#8a8a8a" stroke-width="1.1"/><path d="M1454 88.6L1457 90.5L1454 92.4Z" fill="#8a8a8a"/><path d="M1450 98.5L1458.5 90.6" stroke="#8a8a8a" stroke-width="1.1"/><circle cx="1449" cy="99.6" r="1.6" fill="none" stroke="#8a8a8a" stroke-width="1"/><circle cx="1459.6" cy="89.6" r="1.6" fill="none" stroke="#8a8a8a" stroke-width="1"/>
<path d="M1480.3 97.5V94Q1480.3 90.5 1483 90.5Q1485.8 90.5 1485.8 94V95.5Q1485.8 98.5 1488.3 98.5Q1491 98.5 1491 95V92" fill="none" stroke="#8a8a8a" stroke-width="1.1"/><circle cx="1479.8" cy="98.8" r="1.3" fill="none" stroke="#8a8a8a" stroke-width=".9"/><circle cx="1491.6" cy="98.8" r="1.3" fill="none" stroke="#8a8a8a" stroke-width=".9"/>
<circle cx="1516" cy="93.6" r="4.8" fill="#8a8a8a"/><circle cx="1516" cy="93.6" r="1.7" fill="#383838"/><rect x="1514.8" y="98" width="2.4" height="4.5" fill="#8a8a8a"/><path d="M1520.8 93.6H1525.5" stroke="#8a8a8a" stroke-width="1.2"/>
<path d="M1542.5 101V95.5H1549V90H1558V101Z" fill="#8a8a8a"/>
<rect x="1574.5" y="87.5" width="15.2" height="15" fill="none" stroke="#8a8a8a" stroke-width="1"/><path d="M1579.3 97.6L1585.3 92.4" stroke="#8a8a8a" stroke-width="1"/><circle cx="1578.6" cy="98.2" r="1.2" fill="none" stroke="#8a8a8a" stroke-width=".9"/><circle cx="1586" cy="91.8" r="1.2" fill="none" stroke="#8a8a8a" stroke-width=".9"/>
<path d="M1607.5 90.5V101H1620.5V90.5" fill="none" stroke="#8a8a8a" stroke-width="1"/><circle cx="1607.5" cy="89.3" r="1.2" fill="none" stroke="#8a8a8a" stroke-width=".9"/><circle cx="1620.5" cy="89.3" r="1.2" fill="none" stroke="#8a8a8a" stroke-width=".9"/><text x="1614" y="99.2" font-size="6.5" text-anchor="middle" fill="#8a8a8a" font-family="Liberation Sans,sans-serif">10</text>
<text x="1646" y="101.6" font-size="19" font-weight="bold" text-anchor="middle" fill="#777" font-family="Liberation Serif,serif">A</text>
<path d="M1671.5 101L1685 89" stroke="#777" stroke-width="1.2"/>
<path d="M1339.4 104.2V109.0H1334.6Z" fill="#cfcfcf"/>
<path d="M1371.4 104.2V109.0H1366.6Z" fill="#cfcfcf"/>
<path d="M1403.4 104.2V109.0H1398.6Z" fill="#cfcfcf"/>
<path d="M1436.4 104.2V109.0H1431.6Z" fill="#cfcfcf"/>
<path d="M1468.4 104.2V109.0H1463.6Z" fill="#cfcfcf"/>
<path d="M1500.4 104.2V109.0H1495.6Z" fill="#cfcfcf"/>
<path d="M1532.4 104.2V109.0H1527.6Z" fill="#cfcfcf"/>
<path d="M1564.4 104.2V109.0H1559.6Z" fill="#cfcfcf"/>
<path d="M1596.4 104.2V109.0H1591.6Z" fill="#cfcfcf"/>
<path d="M1628.4 104.2V109.0H1623.6Z" fill="#cfcfcf"/>
<path d="M1693.4 104.2V109.0H1688.6Z" fill="#cfcfcf"/>
</svg>
</body></html>
